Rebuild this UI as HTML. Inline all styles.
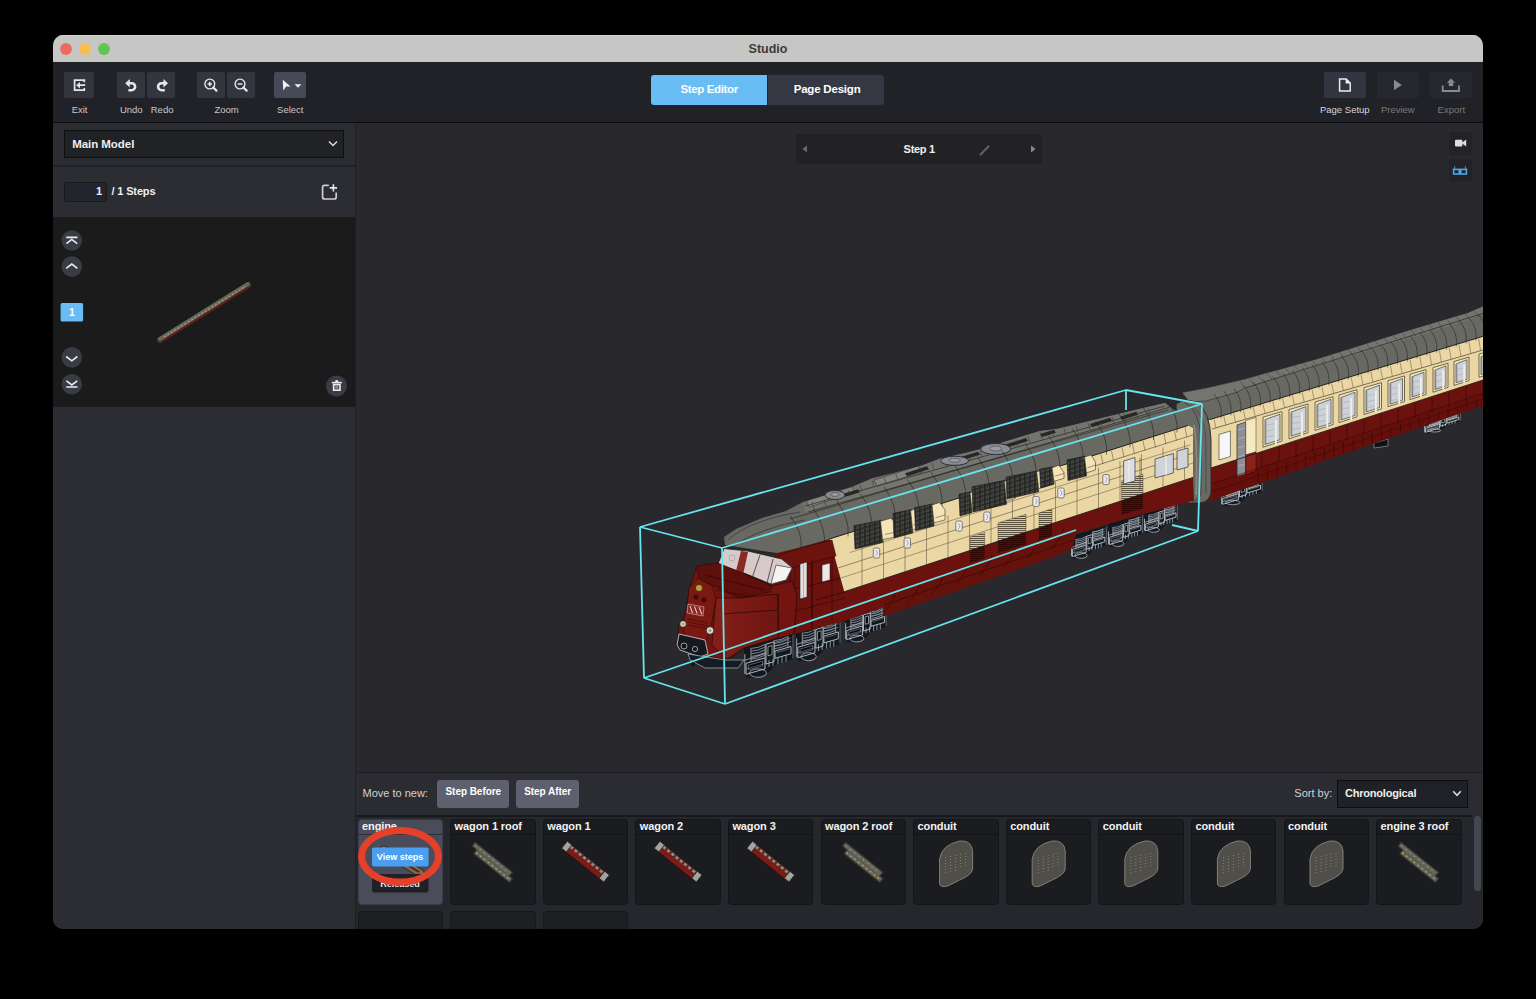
<!DOCTYPE html><html><head><meta charset="utf-8"><style>
*{margin:0;padding:0;box-sizing:border-box}
html,body{width:1536px;height:999px;background:#000;overflow:hidden;font-family:"Liberation Sans",sans-serif}
#win{position:absolute;left:53px;top:35px;width:1430px;height:894px;border-radius:10px;overflow:hidden;background:#2c2d32}
#in{position:absolute;left:-53px;top:-35px;width:1536px;height:999px}
.r{position:absolute}
.t{position:absolute;white-space:nowrap;line-height:1}
svg{position:absolute;left:0;top:0}
</style></head><body><div id="win"><div id="in">
<div class="r" style="left:53px;top:35px;width:1430px;height:27px;background:#c6c6c4;"></div>
<div class="r" style="left:53px;top:35px;width:1430px;height:1px;background:#d3d3d1;"></div>
<div class="t" style="left:718.0px;top:43.3px;width:100px;text-align:center;font-size:12.5px;font-weight:bold;color:#3b3b3b;letter-spacing:0px">Studio</div>
<div class="r" style="left:53px;top:62px;width:1430px;height:60px;background:#212227;"></div>
<div class="r" style="left:53px;top:122px;width:1430px;height:1px;background:#0b0b0d;"></div>
<div class="r" style="left:64px;top:72px;width:30px;height:26px;background:#34363f;border-radius:2px"></div>
<div class="r" style="left:117px;top:72px;width:28px;height:26px;background:#34363f;border-radius:2px"></div>
<div class="r" style="left:147px;top:72px;width:28px;height:26px;background:#34363f;border-radius:2px"></div>
<div class="r" style="left:197px;top:72px;width:28px;height:26px;background:#34363f;border-radius:2px"></div>
<div class="r" style="left:227px;top:72px;width:28px;height:26px;background:#34363f;border-radius:2px"></div>
<div class="r" style="left:274px;top:72px;width:32px;height:26px;background:#464958;border-radius:2px"></div>
<div class="r" style="left:1324px;top:72px;width:42px;height:26px;background:#333640;border-radius:2px"></div>
<div class="r" style="left:1377px;top:72px;width:42px;height:26px;background:#262830;border-radius:2px"></div>
<div class="r" style="left:1430px;top:72px;width:42px;height:26px;background:#262830;border-radius:2px"></div>
<div class="t" style="left:39.6px;top:104.7px;width:80px;text-align:center;font-size:9.5px;font-weight:normal;color:#c8c8cb;letter-spacing:0px">Exit</div>
<div class="t" style="left:91.3px;top:104.7px;width:80px;text-align:center;font-size:9.5px;font-weight:normal;color:#c8c8cb;letter-spacing:0px">Undo</div>
<div class="t" style="left:122.1px;top:104.7px;width:80px;text-align:center;font-size:9.5px;font-weight:normal;color:#c8c8cb;letter-spacing:0px">Redo</div>
<div class="t" style="left:186.6px;top:104.7px;width:80px;text-align:center;font-size:9.5px;font-weight:normal;color:#c8c8cb;letter-spacing:0px">Zoom</div>
<div class="t" style="left:250.3px;top:104.7px;width:80px;text-align:center;font-size:9.5px;font-weight:normal;color:#c8c8cb;letter-spacing:0px">Select</div>
<div class="t" style="left:1304.8px;top:104.7px;width:80px;text-align:center;font-size:9.5px;font-weight:normal;color:#d6d6d9;letter-spacing:0px">Page Setup</div>
<div class="t" style="left:1357.8px;top:104.7px;width:80px;text-align:center;font-size:9.5px;font-weight:normal;color:#78797f;letter-spacing:0px">Preview</div>
<div class="t" style="left:1411.3px;top:104.7px;width:80px;text-align:center;font-size:9.5px;font-weight:normal;color:#78797f;letter-spacing:0px">Export</div>
<div class="r" style="left:651px;top:75px;width:116px;height:30px;background:#68bdf5;border-radius:3px 0 0 3px"></div>
<div class="r" style="left:768px;top:75px;width:116px;height:30px;background:#353842;border-radius:0 3px 3px 0"></div>
<div class="t" style="left:680.4px;top:83.9px;font-size:11.5px;font-weight:bold;color:#ffffff;letter-spacing:-0.35px">Step Editor</div>
<div class="t" style="left:793.7px;top:83.9px;font-size:11.5px;font-weight:bold;color:#ffffff;letter-spacing:-0.2px">Page Design</div>
<div class="r" style="left:53px;top:123px;width:302px;height:806px;background:#2c2d32;"></div>
<div class="r" style="left:355px;top:123px;width:1px;height:806px;background:#1f1f23;"></div>
<div class="r" style="left:64px;top:130px;width:280px;height:28px;background:#212226;border:1px solid #0e0e10"></div>
<div class="t" style="left:72.2px;top:139.0px;font-size:11.5px;font-weight:bold;color:#eeeeee;letter-spacing:-0.05px">Main Model</div>
<div class="r" style="left:53px;top:165px;width:302px;height:2px;background:#222328;"></div>
<div class="r" style="left:64px;top:182px;width:43px;height:20px;background:#23252e;border:1px solid #18191d;border-radius:2px"></div>
<div class="t" style="left:96.0px;top:186.4px;font-size:11px;font-weight:bold;color:#f0f0f0;letter-spacing:0px">1</div>
<div class="t" style="left:111.5px;top:186.4px;font-size:11px;font-weight:bold;color:#eeeeee;letter-spacing:-0.15px">/ 1 Steps</div>
<div class="r" style="left:53px;top:217px;width:302px;height:190px;background:#1b1b1c;"></div>
<div class="r" style="left:356px;top:123px;width:1127px;height:649px;background:#29282d;"></div>
<div class="r" style="left:796px;top:134px;width:246px;height:30px;background:#222226;border-radius:3px"></div>
<div class="t" style="left:903.6px;top:144.3px;font-size:11px;font-weight:bold;color:#eeeeee;letter-spacing:-0.3px">Step 1</div>
<div class="r" style="left:1449px;top:132px;width:23px;height:23px;background:#232327;border-radius:3px"></div>
<div class="r" style="left:1449px;top:159px;width:23px;height:23px;background:#232327;border-radius:3px"></div>
<div class="r" style="left:356px;top:772px;width:1127px;height:1px;background:#1f1f23;"></div>
<div class="r" style="left:356px;top:773px;width:1127px;height:156px;background:#2b2c31;"></div>
<div class="t" style="left:362.5px;top:787.9px;font-size:11px;font-weight:normal;color:#d2d2d5;letter-spacing:0px">Move to new:</div>
<div class="r" style="left:437px;top:780px;width:72px;height:28px;background:#5e606e;border-radius:3px"></div>
<div class="r" style="left:516px;top:780px;width:63px;height:28px;background:#5e606e;border-radius:3px"></div>
<div class="t" style="left:445.5px;top:787.0px;font-size:10px;font-weight:bold;color:#ffffff;letter-spacing:-0.05px">Step Before</div>
<div class="t" style="left:524.2px;top:787.0px;font-size:10px;font-weight:bold;color:#ffffff;letter-spacing:-0.05px">Step After</div>
<div class="t" style="left:1294.3px;top:788.3px;font-size:11px;font-weight:normal;color:#d2d2d5;letter-spacing:0px">Sort by:</div>
<div class="r" style="left:1337px;top:780px;width:131px;height:28px;background:#202126;border:1px solid #0d0d0f"></div>
<div class="t" style="left:1344.9px;top:788.3px;font-size:11px;font-weight:bold;color:#eeeeee;letter-spacing:-0.2px">Chronological</div>
<div class="r" style="left:356px;top:815px;width:1116px;height:2px;background:#17181b;"></div>
<div class="r" style="left:356px;top:817px;width:1127px;height:112px;background:#26272c;"></div>
<div class="r" style="left:357.5px;top:819px;width:85.5px;height:86px;background:#4a4c5a;border:1px solid #3a3c48;border-radius:4px"></div>
<div class="r" style="left:358px;top:833.5px;width:84px;height:1.5px;background:#2b2d37;"></div>
<div class="t" style="left:362.0px;top:821.2px;font-size:11px;font-weight:bold;color:#f2f2f2;letter-spacing:-0.1px">engine</div>
<div class="r" style="left:450.1px;top:819px;width:85.5px;height:86px;background:#1b1c20;border:1px solid #141518;border-radius:4px"></div>
<div class="r" style="left:451px;top:833.5px;width:84px;height:1.5px;background:#121316;"></div>
<div class="t" style="left:454.6px;top:821.2px;font-size:11px;font-weight:bold;color:#f2f2f2;letter-spacing:-0.1px">wagon 1 roof</div>
<div class="r" style="left:542.7px;top:819px;width:85.5px;height:86px;background:#1b1c20;border:1px solid #141518;border-radius:4px"></div>
<div class="r" style="left:544px;top:833.5px;width:83px;height:1.5px;background:#121316;"></div>
<div class="t" style="left:547.2px;top:821.2px;font-size:11px;font-weight:bold;color:#f2f2f2;letter-spacing:-0.1px">wagon 1</div>
<div class="r" style="left:635.3px;top:819px;width:85.5px;height:86px;background:#1b1c20;border:1px solid #141518;border-radius:4px"></div>
<div class="r" style="left:636px;top:833.5px;width:84px;height:1.5px;background:#121316;"></div>
<div class="t" style="left:639.8px;top:821.2px;font-size:11px;font-weight:bold;color:#f2f2f2;letter-spacing:-0.1px">wagon 2</div>
<div class="r" style="left:727.9px;top:819px;width:85.5px;height:86px;background:#1b1c20;border:1px solid #141518;border-radius:4px"></div>
<div class="r" style="left:729px;top:833.5px;width:83px;height:1.5px;background:#121316;"></div>
<div class="t" style="left:732.4px;top:821.2px;font-size:11px;font-weight:bold;color:#f2f2f2;letter-spacing:-0.1px">wagon 3</div>
<div class="r" style="left:820.5px;top:819px;width:85.5px;height:86px;background:#1b1c20;border:1px solid #141518;border-radius:4px"></div>
<div class="r" style="left:822px;top:833.5px;width:83px;height:1.5px;background:#121316;"></div>
<div class="t" style="left:825.0px;top:821.2px;font-size:11px;font-weight:bold;color:#f2f2f2;letter-spacing:-0.1px">wagon 2 roof</div>
<div class="r" style="left:913.1px;top:819px;width:85.5px;height:86px;background:#1b1c20;border:1px solid #141518;border-radius:4px"></div>
<div class="r" style="left:914px;top:833.5px;width:84px;height:1.5px;background:#121316;"></div>
<div class="t" style="left:917.6px;top:821.2px;font-size:11px;font-weight:bold;color:#f2f2f2;letter-spacing:-0.1px">conduit</div>
<div class="r" style="left:1005.7px;top:819px;width:85.5px;height:86px;background:#1b1c20;border:1px solid #141518;border-radius:4px"></div>
<div class="r" style="left:1007px;top:833.5px;width:83px;height:1.5px;background:#121316;"></div>
<div class="t" style="left:1010.2px;top:821.2px;font-size:11px;font-weight:bold;color:#f2f2f2;letter-spacing:-0.1px">conduit</div>
<div class="r" style="left:1098.3px;top:819px;width:85.5px;height:86px;background:#1b1c20;border:1px solid #141518;border-radius:4px"></div>
<div class="r" style="left:1099px;top:833.5px;width:84px;height:1.5px;background:#121316;"></div>
<div class="t" style="left:1102.8px;top:821.2px;font-size:11px;font-weight:bold;color:#f2f2f2;letter-spacing:-0.1px">conduit</div>
<div class="r" style="left:1190.9px;top:819px;width:85.5px;height:86px;background:#1b1c20;border:1px solid #141518;border-radius:4px"></div>
<div class="r" style="left:1192px;top:833.5px;width:83px;height:1.5px;background:#121316;"></div>
<div class="t" style="left:1195.4px;top:821.2px;font-size:11px;font-weight:bold;color:#f2f2f2;letter-spacing:-0.1px">conduit</div>
<div class="r" style="left:1283.5px;top:819px;width:85.5px;height:86px;background:#1b1c20;border:1px solid #141518;border-radius:4px"></div>
<div class="r" style="left:1284px;top:833.5px;width:84px;height:1.5px;background:#121316;"></div>
<div class="t" style="left:1288.0px;top:821.2px;font-size:11px;font-weight:bold;color:#f2f2f2;letter-spacing:-0.1px">conduit</div>
<div class="r" style="left:1376.1px;top:819px;width:85.5px;height:86px;background:#1b1c20;border:1px solid #141518;border-radius:4px"></div>
<div class="r" style="left:1377px;top:833.5px;width:84px;height:1.5px;background:#121316;"></div>
<div class="t" style="left:1380.6px;top:821.2px;font-size:11px;font-weight:bold;color:#f2f2f2;letter-spacing:-0.1px">engine 3 roof</div>
<div class="r" style="left:357.5px;top:910.5px;width:85.5px;height:30px;background:#1e1f23;border:1px solid #17181b;border-radius:4px"></div>
<div class="r" style="left:450.1px;top:910.5px;width:85.5px;height:30px;background:#1e1f23;border:1px solid #17181b;border-radius:4px"></div>
<div class="r" style="left:542.7px;top:910.5px;width:85.5px;height:30px;background:#1e1f23;border:1px solid #17181b;border-radius:4px"></div>
<div class="r" style="left:1474px;top:816px;width:7px;height:75px;background:#45474f;border-radius:4px"></div>
<svg width="1536" height="999" viewBox="0 0 1536 999">
<g fill="none" stroke="#e6e6e8" stroke-linecap="butt">
 <!-- Exit -->
 <path d="M84.3 82.2 V80.1 H74.6 V90.2 H84.3 V88.1" stroke-width="1.7"/>
 <path d="M85.2 85.2 H79" stroke-width="1.8"/>
 <polygon points="76.2,85.2 80,81.9 80,88.5" fill="#e6e6e8" stroke="none"/>
 <!-- Undo -->
 <path d="M128.5 83.2 H131.6 A3.5 3.5 0 0 1 131.6 90.2 H128.4" stroke-width="2.6"/>
 <polygon points="125.2,83.2 129.8,79 129.8,87.4" fill="#e6e6e8" stroke="none"/>
 <!-- Redo -->
 <path d="M164.7 83.2 H161.6 A3.5 3.5 0 0 0 161.6 90.2 H164.8" stroke-width="2.6"/>
 <polygon points="168,83.2 163.4,79 163.4,87.4" fill="#e6e6e8" stroke="none"/>
 <!-- Zoom in -->
 <circle cx="209.8" cy="84" r="4.9" stroke-width="1.4"/>
 <path d="M213.3 87.5 L216.4 90.6" stroke-width="2.3" stroke-linecap="round"/>
 <path d="M207.6 84 H212 M209.8 81.8 V86.2" stroke-width="1.5"/>
 <!-- Zoom out -->
 <circle cx="240" cy="84" r="4.9" stroke-width="1.4"/>
 <path d="M243.5 87.5 L246.6 90.6" stroke-width="2.3" stroke-linecap="round"/>
 <path d="M237.6 84 H242.4" stroke-width="1.6"/>
 <!-- Select -->
 <polygon points="282.7,79.8 290.6,86.4 286.2,86.4 283.3,90.4" fill="#f2f2f4" stroke="none"/>
 <polygon points="294.6,84.2 301.4,84.2 298,87.8" fill="#f2f2f4" stroke="none"/>
 <!-- Page setup doc -->
 <path d="M1339.6 79 H1346.2 L1350.2 83 V91 H1339.6 Z" stroke-width="1.5" stroke="#ececee"/>
 <polygon points="1345.6,78.6 1350.8,83.6 1345.6,83.6" fill="#ececee" stroke="none"/>
 <!-- Preview -->
 <polygon points="1394,79.7 1401.8,85 1394,90.3" fill="#8a8b90" stroke="none"/>
 <!-- Export -->
 <path d="M1442.7 85.6 V91 H1459 V85.6" stroke-width="1.8" stroke="#8a8b90"/>
 <polygon points="1446.8,82.8 1451,78.6 1455.2,82.8" fill="#8a8b90" stroke="none"/>
 <rect x="1448.8" y="82.5" width="4.4" height="3.5" fill="#8a8b90" stroke="none"/>
</g>
<!-- dropdown chevrons -->
<path d="M329 141.5 L333 145.5 L337 141.5" fill="none" stroke="#dcdcde" stroke-width="1.5"/>
<path d="M1453.2 791.3 L1457 795.3 L1460.8 791.3" fill="none" stroke="#dcdcde" stroke-width="1.5"/>
<!-- add step icon -->
<path d="M328.8 185.3 H324.6 Q322.6 185.3 322.6 187.3 V197 Q322.6 199 324.6 199 H334.2 Q336.2 199 336.2 197 V192.6" fill="none" stroke="#cfcfd1" stroke-width="1.7"/>
<path d="M333.4 184.2 V191.6 M329.7 187.9 H337.1" fill="none" stroke="#ececee" stroke-width="1.6"/>
<!-- step list circles -->
<g fill="#393b45">
 <circle cx="71.8" cy="240.5" r="10.3"/>
 <circle cx="71.8" cy="266.6" r="10.3"/>
 <circle cx="71.8" cy="357.4" r="10.3"/>
 <circle cx="71.8" cy="384.2" r="10.3"/>
 <circle cx="336.5" cy="386" r="10.5"/>
</g>
<g fill="none" stroke="#ececee" stroke-width="1.6">
 <path d="M66.2 237.4 H77.5 M66.4 243.6 L71.8 239.4 L77.2 243.6"/>
 <path d="M66.2 268.4 L71.8 264 L77.4 268.4"/>
 <path d="M66.2 356.5 L71.8 360.8 L77.4 356.5"/>
 <path d="M66.4 380.9 L71.8 385 L77.2 380.9 M66.2 387 H77.5"/>
</g>
<!-- trash -->
<g fill="#ececee">
 <rect x="331.9" y="381.8" width="9.9" height="1.6"/>
 <rect x="335.3" y="380.2" width="2.8" height="2"/>
</g>
<rect x="333.6" y="384.6" width="6.4" height="5.6" fill="none" stroke="#ececee" stroke-width="1.6"/>
<rect x="335.2" y="386" width="3.2" height="2.8" fill="#888"/>
<!-- step 1 box -->
<rect x="60.6" y="303" width="22.5" height="18.5" rx="1.5" fill="#69bdf4"/>
<!-- step bar arrows -->
<polygon points="802.5,149 807,145.5 807,152.5" fill="#6a6a70"/>
<polygon points="1035.5,149 1031,145.5 1031,152.5" fill="#8a8a90"/>
<path d="M980.5 154.5 L988.5 146.5" stroke="#5f5f64" stroke-width="2.2" stroke-linecap="round"/>
<!-- camera -->
<rect x="1455" y="139.8" width="7.4" height="6.6" rx="1" fill="#dddddf"/>
<polygon points="1461.5,143.1 1466.2,139.6 1466.2,146.6" fill="#dddddf"/>
<!-- glasses -->
<path d="M1453.8 169.5 L1455 166.5 M1466.2 169.5 L1465 166.5" stroke="#4aa6e8" stroke-width="1" fill="none"/>
<rect x="1453.6" y="169.4" width="5.6" height="4.6" fill="none" stroke="#4aa6e8" stroke-width="1.6"/>
<rect x="1460.8" y="169.4" width="5.6" height="4.6" fill="none" stroke="#4aa6e8" stroke-width="1.6"/>
<path d="M1459.2 170.4 H1460.8" stroke="#4aa6e8" stroke-width="1.4"/>
</svg>

<svg width="1536" height="999" viewBox="0 0 1536 999">
<defs><clipPath id="vpc"><rect x="356" y="123" width="1127" height="649"/></clipPath><pattern id="grl" width="5" height="4.5" patternUnits="userSpaceOnUse" patternTransform="skewY(-17)"><rect width="5" height="4.5" fill="#222320"/><rect x="0.6" y="0.6" width="3.6" height="3.1" fill="#4c4d48"/><rect x="1.4" y="1.3" width="2" height="1.6" fill="#33342f"/></pattern><pattern id="rgrl" width="3" height="2" patternUnits="userSpaceOnUse"><rect width="3" height="2" fill="#4e0d09"/><rect y="0" width="3" height="0.8" fill="#2a0604"/></pattern><pattern id="cgrl" width="3" height="2" patternUnits="userSpaceOnUse"><rect width="3" height="2" fill="#d8c594"/><rect y="0" width="3" height="0.8" fill="#3a3528"/></pattern></defs>
<g clip-path="url(#vpc)">
<polygon points="1221.0,488.0 1263.0,475.4 1263.0,491.4 1247.0,496.6 1242.0,500.9 1229.4,505.5 1223.1,506.0 1221.0,504.0" fill="#121820"/>
<path d="M1227.3 490.1 Q1232.8 490.1 1238.2 486.8" stroke="#9aa2a8" stroke-width="0.8" fill="none"/>
<path d="M1227.3 491.5 Q1232.8 491.5 1238.2 488.2" stroke="#9aa2a8" stroke-width="0.8" fill="none"/>
<path d="M1227.3 492.9 Q1232.8 492.9 1238.2 489.6" stroke="#9aa2a8" stroke-width="0.8" fill="none"/>
<path d="M1227.3 494.3 Q1232.8 494.3 1238.2 491.0" stroke="#9aa2a8" stroke-width="0.8" fill="none"/>
<path d="M1227.3 495.7 Q1232.8 495.7 1238.2 492.4" stroke="#9aa2a8" stroke-width="0.8" fill="none"/>
<polyline points="1226.9,489.8 1226.9,497.0" fill="none" stroke="#c0c6cc" stroke-width="0.7" />
<polyline points="1238.6,486.3 1238.6,493.5" fill="none" stroke="#c0c6cc" stroke-width="0.7" />
<path d="M1246.6 482.3 Q1252.1 482.3 1257.5 479.0" stroke="#9aa2a8" stroke-width="0.8" fill="none"/>
<path d="M1246.6 483.7 Q1252.1 483.7 1257.5 480.4" stroke="#9aa2a8" stroke-width="0.8" fill="none"/>
<path d="M1246.6 485.1 Q1252.1 485.1 1257.5 481.8" stroke="#9aa2a8" stroke-width="0.8" fill="none"/>
<path d="M1246.6 486.5 Q1252.1 486.5 1257.5 483.2" stroke="#9aa2a8" stroke-width="0.8" fill="none"/>
<path d="M1246.6 487.9 Q1252.1 487.9 1257.5 484.6" stroke="#9aa2a8" stroke-width="0.8" fill="none"/>
<polyline points="1246.2,482.0 1246.2,489.2" fill="none" stroke="#c0c6cc" stroke-width="0.7" />
<polyline points="1258.0,478.5 1258.0,485.7" fill="none" stroke="#c0c6cc" stroke-width="0.7" />
<polygon points="1222.7,498.5 1238.6,493.7 1238.6,499.5 1222.7,504.3" fill="#121820" stroke="#c0c6cc" stroke-width="0.9" stroke-linejoin="round"/>
<polygon points="1224.8,499.3 1236.5,495.7 1236.5,498.1 1224.8,501.7" fill="#06090d" stroke="#9aa2a8" stroke-width="0.5" stroke-linejoin="round"/>
<polygon points="1239.5,486.5 1246.2,484.4 1246.2,494.8 1239.5,496.9" fill="#121820" stroke="#c0c6cc" stroke-width="0.9" stroke-linejoin="round"/>
<polygon points="1241.2,487.6 1244.5,486.5 1244.5,491.3 1241.2,492.4" fill="#06090d" stroke="#c0c6cc" stroke-width="0.7" stroke-linejoin="round"/>
<polygon points="1247.0,489.2 1260.5,485.2 1260.5,489.0 1247.0,493.0" fill="#121820" stroke="#c0c6cc" stroke-width="0.9" stroke-linejoin="round"/>
<polyline points="1248.7,489.7 1258.8,486.7" fill="none" stroke="#9aa2a8" stroke-width="0.5" />
<polyline points="1242.0,494.5 1242.0,498.1" fill="none" stroke="#c0c6cc" stroke-width="0.7" />
<polyline points="1245.4,493.5 1245.4,497.1" fill="none" stroke="#c0c6cc" stroke-width="0.7" />
<polyline points="1249.6,492.2 1249.6,495.8" fill="none" stroke="#c0c6cc" stroke-width="0.7" />
<polyline points="1252.9,491.2 1252.9,494.8" fill="none" stroke="#c0c6cc" stroke-width="0.7" />
<polyline points="1256.3,490.2 1256.3,493.8" fill="none" stroke="#c0c6cc" stroke-width="0.7" />
<polyline points="1221.8,496.9 1239.5,491.3" fill="none" stroke="#c0c6cc" stroke-width="0.7" />
<polyline points="1247.0,482.6 1260.5,478.6" fill="none" stroke="#9aa2a8" stroke-width="0.6" />
<polyline points="1247.0,484.6 1260.5,480.6" fill="none" stroke="#9aa2a8" stroke-width="0.6" />
<polyline points="1247.0,486.6 1260.5,482.6" fill="none" stroke="#9aa2a8" stroke-width="0.6" />
<polyline points="1222.7,501.5 1238.6,496.7" fill="none" stroke="#9aa2a8" stroke-width="0.5" />
<ellipse cx="1232.8" cy="502.5" rx="7.1" ry="2.2" fill="none" stroke="#c0c6cc" stroke-width="0.7"/>
<polyline points="1221.6,493.8 1221.6,504.2" fill="none" stroke="#c0c6cc" stroke-width="0.8" />
<polyline points="1262.2,476.7 1262.2,491.3" fill="none" stroke="#9aa2a8" stroke-width="0.6" />
<polygon points="1424.0,421.0 1461.0,409.9 1461.0,421.1 1446.9,425.6 1442.5,428.9 1431.4,432.8 1425.8,433.5 1424.0,432.2" fill="#121820"/>
<path d="M1429.5 422.1 Q1434.4 422.3 1439.2 419.2" stroke="#9aa2a8" stroke-width="0.8" fill="none"/>
<path d="M1429.5 423.1 Q1434.4 423.3 1439.2 420.2" stroke="#9aa2a8" stroke-width="0.8" fill="none"/>
<path d="M1429.5 424.1 Q1434.4 424.3 1439.2 421.2" stroke="#9aa2a8" stroke-width="0.8" fill="none"/>
<path d="M1429.5 425.1 Q1434.4 425.2 1439.2 422.2" stroke="#9aa2a8" stroke-width="0.8" fill="none"/>
<path d="M1429.5 426.1 Q1434.4 426.2 1439.2 423.2" stroke="#9aa2a8" stroke-width="0.8" fill="none"/>
<polyline points="1429.2,422.0 1429.2,427.0" fill="none" stroke="#c0c6cc" stroke-width="0.7" />
<polyline points="1439.5,418.9 1439.5,423.9" fill="none" stroke="#c0c6cc" stroke-width="0.7" />
<path d="M1446.6 415.6 Q1451.4 415.8 1456.2 412.7" stroke="#9aa2a8" stroke-width="0.8" fill="none"/>
<path d="M1446.6 416.6 Q1451.4 416.8 1456.2 413.7" stroke="#9aa2a8" stroke-width="0.8" fill="none"/>
<path d="M1446.6 417.6 Q1451.4 417.7 1456.2 414.7" stroke="#9aa2a8" stroke-width="0.8" fill="none"/>
<path d="M1446.6 418.6 Q1451.4 418.7 1456.2 415.7" stroke="#9aa2a8" stroke-width="0.8" fill="none"/>
<path d="M1446.6 419.5 Q1451.4 419.7 1456.2 416.7" stroke="#9aa2a8" stroke-width="0.8" fill="none"/>
<polyline points="1446.2,415.5 1446.2,420.5" fill="none" stroke="#c0c6cc" stroke-width="0.7" />
<polyline points="1456.6,412.4 1456.6,417.4" fill="none" stroke="#c0c6cc" stroke-width="0.7" />
<polygon points="1425.5,428.3 1439.5,424.0 1439.5,428.1 1425.5,432.3" fill="#121820" stroke="#c0c6cc" stroke-width="0.9" stroke-linejoin="round"/>
<polygon points="1427.3,428.7 1437.7,425.6 1437.7,427.3 1427.3,430.4" fill="#06090d" stroke="#9aa2a8" stroke-width="0.5" stroke-linejoin="round"/>
<polygon points="1440.3,418.9 1446.2,417.1 1446.2,424.4 1440.3,426.2" fill="#121820" stroke="#c0c6cc" stroke-width="0.9" stroke-linejoin="round"/>
<polygon points="1441.8,419.6 1444.7,418.7 1444.7,422.1 1441.8,423.0" fill="#06090d" stroke="#c0c6cc" stroke-width="0.7" stroke-linejoin="round"/>
<polygon points="1446.9,420.4 1458.8,416.9 1458.8,419.5 1446.9,423.1" fill="#121820" stroke="#c0c6cc" stroke-width="0.9" stroke-linejoin="round"/>
<polyline points="1448.4,420.7 1457.3,418.0" fill="none" stroke="#9aa2a8" stroke-width="0.5" />
<polyline points="1442.5,424.4 1442.5,426.9" fill="none" stroke="#c0c6cc" stroke-width="0.7" />
<polyline points="1445.5,423.5 1445.5,426.0" fill="none" stroke="#c0c6cc" stroke-width="0.7" />
<polyline points="1449.2,422.4 1449.2,424.9" fill="none" stroke="#c0c6cc" stroke-width="0.7" />
<polyline points="1452.1,421.5 1452.1,424.0" fill="none" stroke="#c0c6cc" stroke-width="0.7" />
<polyline points="1455.1,420.6 1455.1,423.2" fill="none" stroke="#c0c6cc" stroke-width="0.7" />
<polyline points="1424.7,427.2 1440.3,422.3" fill="none" stroke="#c0c6cc" stroke-width="0.7" />
<polyline points="1446.9,415.8 1458.8,412.2" fill="none" stroke="#9aa2a8" stroke-width="0.6" />
<polyline points="1446.9,417.2 1458.8,413.6" fill="none" stroke="#9aa2a8" stroke-width="0.6" />
<polyline points="1446.9,418.6 1458.8,415.0" fill="none" stroke="#9aa2a8" stroke-width="0.6" />
<polyline points="1425.5,430.4 1439.5,426.1" fill="none" stroke="#9aa2a8" stroke-width="0.5" />
<ellipse cx="1434.4" cy="430.5" rx="6.3" ry="1.5" fill="none" stroke="#c0c6cc" stroke-width="0.7"/>
<polyline points="1424.6,425.0 1424.6,432.3" fill="none" stroke="#c0c6cc" stroke-width="0.8" />
<polyline points="1460.3,410.8 1460.3,421.0" fill="none" stroke="#9aa2a8" stroke-width="0.6" />
<polygon points="1374.0,443.0 1388.0,439.0 1388.0,446.0 1374.0,448.0" fill="#0c1117" stroke="#a9b0b6" stroke-width="0.6" stroke-linejoin="round"/>
<polygon points="1206.0,469.6 1484.0,379.7 1484.0,405.0 1212.0,500.0 1206.0,502.1" fill="#6c120e"/>
<polygon points="1212.0,483.7 1484.0,392.7 1484.0,405.0 1212.0,500.0" fill="#640f0b"/>
<polygon points="1206.0,420.7 1484.0,336.0 1484.0,379.7 1206.0,469.6" fill="#ebd7a4"/>
<polygon points="1182.0,392.5 1206.0,388.0 1245.0,379.0 1318.0,359.0 1410.0,330.3 1468.0,313.0 1484.0,306.0 1484.0,336.0 1210.0,419.5 1196.0,412.0" fill="#686963"/>
<polygon points="1182.0,392.5 1206.0,388.0 1245.0,379.0 1250.0,384.0 1238.0,392.0 1206.0,401.0 1190.0,402.0" fill="#74756e" stroke="#1e1d1a" stroke-width="0.5" stroke-linejoin="round"/>
<polygon points="1237.6,382.0 1318.0,359.0 1410.0,330.3 1468.0,313.0 1484.0,306.0 1484.0,313.0 1468.0,320.0 1410.0,338.0 1318.0,366.0 1245.0,388.0" fill="#74756e"/>
<line x1="1245.0" y1="388.0" x2="1484.0" y2="313.0" stroke="#1e1d1a" stroke-width="0.6" />
<path d="M1214.0 394.1 Q1223.0 404.2 1221.0 418.3" stroke="#1e1d1a" stroke-width="0.5" fill="none"/>
<path d="M1223.8 391.1 Q1232.8 401.2 1230.8 415.3" stroke="#1e1d1a" stroke-width="0.5" fill="none"/>
<path d="M1233.6 388.2 Q1242.6 398.3 1240.6 412.3" stroke="#1e1d1a" stroke-width="0.5" fill="none"/>
<path d="M1243.4 385.3 Q1252.4 395.3 1250.4 409.3" stroke="#1e1d1a" stroke-width="0.5" fill="none"/>
<path d="M1253.2 382.3 Q1262.2 392.3 1260.2 406.3" stroke="#1e1d1a" stroke-width="0.5" fill="none"/>
<path d="M1263.0 379.4 Q1272.0 389.4 1270.0 403.3" stroke="#1e1d1a" stroke-width="0.5" fill="none"/>
<path d="M1272.8 376.5 Q1281.8 386.4 1279.8 400.4" stroke="#1e1d1a" stroke-width="0.5" fill="none"/>
<path d="M1282.6 373.5 Q1291.6 383.4 1289.6 397.4" stroke="#1e1d1a" stroke-width="0.5" fill="none"/>
<path d="M1292.4 370.6 Q1301.4 380.5 1299.4 394.4" stroke="#1e1d1a" stroke-width="0.5" fill="none"/>
<path d="M1302.2 367.7 Q1311.2 377.5 1309.2 391.4" stroke="#1e1d1a" stroke-width="0.5" fill="none"/>
<path d="M1312.0 364.7 Q1321.0 374.6 1319.0 388.4" stroke="#1e1d1a" stroke-width="0.5" fill="none"/>
<path d="M1321.8 361.8 Q1330.8 371.6 1328.8 385.4" stroke="#1e1d1a" stroke-width="0.5" fill="none"/>
<path d="M1331.6 358.8 Q1340.6 368.6 1338.6 382.4" stroke="#1e1d1a" stroke-width="0.5" fill="none"/>
<path d="M1341.4 355.9 Q1350.4 365.7 1348.4 379.5" stroke="#1e1d1a" stroke-width="0.5" fill="none"/>
<path d="M1351.2 353.0 Q1360.2 362.7 1358.2 376.5" stroke="#1e1d1a" stroke-width="0.5" fill="none"/>
<path d="M1361.0 350.0 Q1370.0 359.8 1368.0 373.5" stroke="#1e1d1a" stroke-width="0.5" fill="none"/>
<path d="M1370.8 347.1 Q1379.8 356.8 1377.8 370.5" stroke="#1e1d1a" stroke-width="0.5" fill="none"/>
<path d="M1380.6 344.2 Q1389.6 353.8 1387.6 367.5" stroke="#1e1d1a" stroke-width="0.5" fill="none"/>
<path d="M1390.4 341.2 Q1399.4 350.9 1397.4 364.5" stroke="#1e1d1a" stroke-width="0.5" fill="none"/>
<path d="M1400.2 338.3 Q1409.2 347.9 1407.2 361.5" stroke="#1e1d1a" stroke-width="0.5" fill="none"/>
<path d="M1410.0 335.4 Q1419.0 345.0 1417.0 358.6" stroke="#1e1d1a" stroke-width="0.5" fill="none"/>
<path d="M1419.8 332.4 Q1428.8 342.0 1426.8 355.6" stroke="#1e1d1a" stroke-width="0.5" fill="none"/>
<path d="M1429.6 329.5 Q1438.6 339.0 1436.6 352.6" stroke="#1e1d1a" stroke-width="0.5" fill="none"/>
<path d="M1439.4 326.6 Q1448.4 336.1 1446.4 349.6" stroke="#1e1d1a" stroke-width="0.5" fill="none"/>
<path d="M1449.2 323.6 Q1458.2 333.1 1456.2 346.6" stroke="#1e1d1a" stroke-width="0.5" fill="none"/>
<path d="M1459.0 320.7 Q1468.0 330.2 1466.0 343.6" stroke="#1e1d1a" stroke-width="0.5" fill="none"/>
<path d="M1468.8 317.8 Q1477.8 327.2 1475.8 340.6" stroke="#1e1d1a" stroke-width="0.5" fill="none"/>
<path d="M1478.6 314.8 Q1487.6 324.2 1485.6 337.6" stroke="#1e1d1a" stroke-width="0.5" fill="none"/>
<line x1="1240.0" y1="381.3" x2="1245.0" y2="387.3" stroke="#3a3a36" stroke-width="0.5" />
<line x1="1249.0" y1="378.6" x2="1254.0" y2="384.6" stroke="#3a3a36" stroke-width="0.5" />
<line x1="1258.0" y1="375.9" x2="1263.0" y2="381.9" stroke="#3a3a36" stroke-width="0.5" />
<line x1="1267.0" y1="373.2" x2="1272.0" y2="379.2" stroke="#3a3a36" stroke-width="0.5" />
<line x1="1276.0" y1="370.5" x2="1281.0" y2="376.5" stroke="#3a3a36" stroke-width="0.5" />
<line x1="1285.0" y1="367.8" x2="1290.0" y2="373.8" stroke="#3a3a36" stroke-width="0.5" />
<line x1="1294.0" y1="365.1" x2="1299.0" y2="371.1" stroke="#3a3a36" stroke-width="0.5" />
<line x1="1303.0" y1="362.4" x2="1308.0" y2="368.4" stroke="#3a3a36" stroke-width="0.5" />
<line x1="1312.0" y1="359.7" x2="1317.0" y2="365.7" stroke="#3a3a36" stroke-width="0.5" />
<line x1="1321.0" y1="357.0" x2="1326.0" y2="363.0" stroke="#3a3a36" stroke-width="0.5" />
<line x1="1330.0" y1="354.3" x2="1335.0" y2="360.3" stroke="#3a3a36" stroke-width="0.5" />
<line x1="1339.0" y1="351.6" x2="1344.0" y2="357.6" stroke="#3a3a36" stroke-width="0.5" />
<line x1="1348.0" y1="348.9" x2="1353.0" y2="354.9" stroke="#3a3a36" stroke-width="0.5" />
<line x1="1357.0" y1="346.2" x2="1362.0" y2="352.2" stroke="#3a3a36" stroke-width="0.5" />
<line x1="1366.0" y1="343.5" x2="1371.0" y2="349.5" stroke="#3a3a36" stroke-width="0.5" />
<line x1="1375.0" y1="340.9" x2="1380.0" y2="346.9" stroke="#3a3a36" stroke-width="0.5" />
<line x1="1384.0" y1="338.2" x2="1389.0" y2="344.2" stroke="#3a3a36" stroke-width="0.5" />
<line x1="1393.0" y1="335.5" x2="1398.0" y2="341.5" stroke="#3a3a36" stroke-width="0.5" />
<line x1="1402.0" y1="332.8" x2="1407.0" y2="338.8" stroke="#3a3a36" stroke-width="0.5" />
<line x1="1411.0" y1="330.1" x2="1416.0" y2="336.1" stroke="#3a3a36" stroke-width="0.5" />
<line x1="1420.0" y1="327.4" x2="1425.0" y2="333.4" stroke="#3a3a36" stroke-width="0.5" />
<line x1="1429.0" y1="324.7" x2="1434.0" y2="330.7" stroke="#3a3a36" stroke-width="0.5" />
<line x1="1438.0" y1="322.0" x2="1443.0" y2="328.0" stroke="#3a3a36" stroke-width="0.5" />
<line x1="1447.0" y1="319.3" x2="1452.0" y2="325.3" stroke="#3a3a36" stroke-width="0.5" />
<line x1="1456.0" y1="316.6" x2="1461.0" y2="322.6" stroke="#3a3a36" stroke-width="0.5" />
<line x1="1465.0" y1="313.9" x2="1470.0" y2="319.9" stroke="#3a3a36" stroke-width="0.5" />
<line x1="1474.0" y1="311.2" x2="1479.0" y2="317.2" stroke="#3a3a36" stroke-width="0.5" />
<line x1="1483.0" y1="308.5" x2="1488.0" y2="314.5" stroke="#3a3a36" stroke-width="0.5" />
<line x1="1210.0" y1="419.5" x2="1484.0" y2="336.0" stroke="#1e1d1a" stroke-width="0.9" />
<line x1="1212.0" y1="429.0" x2="1483.0" y2="350.0" stroke="#4a4032" stroke-width="0.7" />
<line x1="1214.0" y1="419.3" x2="1216.0" y2="427.8" stroke="#6a5e44" stroke-width="0.55" />
<line x1="1223.8" y1="416.3" x2="1225.8" y2="425.0" stroke="#6a5e44" stroke-width="0.55" />
<line x1="1233.6" y1="413.3" x2="1235.6" y2="422.1" stroke="#6a5e44" stroke-width="0.55" />
<line x1="1243.4" y1="410.3" x2="1245.4" y2="419.3" stroke="#6a5e44" stroke-width="0.55" />
<line x1="1253.2" y1="407.3" x2="1255.2" y2="416.4" stroke="#6a5e44" stroke-width="0.55" />
<line x1="1263.0" y1="404.3" x2="1265.0" y2="413.5" stroke="#6a5e44" stroke-width="0.55" />
<line x1="1272.8" y1="401.4" x2="1274.8" y2="410.7" stroke="#6a5e44" stroke-width="0.55" />
<line x1="1282.6" y1="398.4" x2="1284.6" y2="407.8" stroke="#6a5e44" stroke-width="0.55" />
<line x1="1292.4" y1="395.4" x2="1294.4" y2="405.0" stroke="#6a5e44" stroke-width="0.55" />
<line x1="1302.2" y1="392.4" x2="1304.2" y2="402.1" stroke="#6a5e44" stroke-width="0.55" />
<line x1="1312.0" y1="389.4" x2="1314.0" y2="399.3" stroke="#6a5e44" stroke-width="0.55" />
<line x1="1321.8" y1="386.4" x2="1323.8" y2="396.4" stroke="#6a5e44" stroke-width="0.55" />
<line x1="1331.6" y1="383.4" x2="1333.6" y2="393.6" stroke="#6a5e44" stroke-width="0.55" />
<line x1="1341.4" y1="380.5" x2="1343.4" y2="390.7" stroke="#6a5e44" stroke-width="0.55" />
<line x1="1351.2" y1="377.5" x2="1353.2" y2="387.8" stroke="#6a5e44" stroke-width="0.55" />
<line x1="1361.0" y1="374.5" x2="1363.0" y2="385.0" stroke="#6a5e44" stroke-width="0.55" />
<line x1="1370.8" y1="371.5" x2="1372.8" y2="382.1" stroke="#6a5e44" stroke-width="0.55" />
<line x1="1380.6" y1="368.5" x2="1382.6" y2="379.3" stroke="#6a5e44" stroke-width="0.55" />
<line x1="1390.4" y1="365.5" x2="1392.4" y2="376.4" stroke="#6a5e44" stroke-width="0.55" />
<line x1="1400.2" y1="362.5" x2="1402.2" y2="373.6" stroke="#6a5e44" stroke-width="0.55" />
<line x1="1410.0" y1="359.6" x2="1412.0" y2="370.7" stroke="#6a5e44" stroke-width="0.55" />
<line x1="1419.8" y1="356.6" x2="1421.8" y2="367.8" stroke="#6a5e44" stroke-width="0.55" />
<line x1="1429.6" y1="353.6" x2="1431.6" y2="365.0" stroke="#6a5e44" stroke-width="0.55" />
<line x1="1439.4" y1="350.6" x2="1441.4" y2="362.1" stroke="#6a5e44" stroke-width="0.55" />
<line x1="1449.2" y1="347.6" x2="1451.2" y2="359.3" stroke="#6a5e44" stroke-width="0.55" />
<line x1="1459.0" y1="344.6" x2="1461.0" y2="356.4" stroke="#6a5e44" stroke-width="0.55" />
<line x1="1468.8" y1="341.6" x2="1470.8" y2="353.6" stroke="#6a5e44" stroke-width="0.55" />
<line x1="1478.6" y1="338.6" x2="1480.6" y2="350.7" stroke="#6a5e44" stroke-width="0.55" />
<polygon points="1263.0,417.1 1282.0,411.6 1282.0,441.0 1263.0,447.2" fill="#f3e6bd" stroke="#3a3428" stroke-width="0.7" stroke-linejoin="round"/>
<polygon points="1265.0,419.6 1280.0,414.2 1280.0,439.7 1265.0,444.5" fill="#cdd1d8" stroke="#2a2a2a" stroke-width="0.6" stroke-linejoin="round"/>
<line x1="1275.9" y1="420.1" x2="1275.9" y2="444.7" stroke="#f2eee2" stroke-width="1.8" />
<line x1="1265.8" y1="420.1" x2="1265.8" y2="444.7" stroke="#7a7c82" stroke-width="0.9" />
<line x1="1266.0" y1="425.1" x2="1274.4" y2="423.6" stroke="#a0a4ac" stroke-width="0.5" />
<line x1="1266.0" y1="431.1" x2="1274.4" y2="429.6" stroke="#a0a4ac" stroke-width="0.5" />
<line x1="1266.0" y1="437.1" x2="1274.4" y2="435.6" stroke="#a0a4ac" stroke-width="0.5" />
<polygon points="1289.0,409.6 1308.0,404.0 1308.0,432.6 1289.0,438.8" fill="#f3e6bd" stroke="#3a3428" stroke-width="0.7" stroke-linejoin="round"/>
<polygon points="1291.0,412.1 1306.0,406.6 1306.0,431.3 1291.0,436.1" fill="#cdd1d8" stroke="#2a2a2a" stroke-width="0.6" stroke-linejoin="round"/>
<line x1="1301.9" y1="412.6" x2="1301.9" y2="436.3" stroke="#f2eee2" stroke-width="1.8" />
<line x1="1291.8" y1="412.6" x2="1291.8" y2="436.3" stroke="#7a7c82" stroke-width="0.9" />
<line x1="1292.0" y1="417.6" x2="1300.4" y2="416.1" stroke="#a0a4ac" stroke-width="0.5" />
<line x1="1292.0" y1="423.6" x2="1300.4" y2="422.1" stroke="#a0a4ac" stroke-width="0.5" />
<line x1="1292.0" y1="429.6" x2="1300.4" y2="428.1" stroke="#a0a4ac" stroke-width="0.5" />
<polygon points="1315.0,402.0 1333.0,396.7 1333.0,424.5 1315.0,430.4" fill="#f3e6bd" stroke="#3a3428" stroke-width="0.7" stroke-linejoin="round"/>
<polygon points="1317.0,404.5 1331.0,399.3 1331.0,423.2 1317.0,427.7" fill="#cdd1d8" stroke="#2a2a2a" stroke-width="0.6" stroke-linejoin="round"/>
<line x1="1327.2" y1="405.0" x2="1327.2" y2="427.9" stroke="#f2eee2" stroke-width="1.8" />
<line x1="1317.8" y1="405.0" x2="1317.8" y2="427.9" stroke="#7a7c82" stroke-width="0.9" />
<line x1="1318.0" y1="410.0" x2="1325.8" y2="408.5" stroke="#a0a4ac" stroke-width="0.5" />
<line x1="1318.0" y1="416.0" x2="1325.8" y2="414.5" stroke="#a0a4ac" stroke-width="0.5" />
<line x1="1318.0" y1="422.0" x2="1325.8" y2="420.5" stroke="#a0a4ac" stroke-width="0.5" />
<polygon points="1339.0,395.0 1357.0,389.7 1357.0,416.8 1339.0,422.6" fill="#f3e6bd" stroke="#3a3428" stroke-width="0.7" stroke-linejoin="round"/>
<polygon points="1341.0,397.5 1355.0,392.3 1355.0,415.4 1341.0,420.0" fill="#cdd1d8" stroke="#2a2a2a" stroke-width="0.6" stroke-linejoin="round"/>
<line x1="1351.2" y1="398.0" x2="1351.2" y2="420.1" stroke="#f2eee2" stroke-width="1.8" />
<line x1="1341.8" y1="398.0" x2="1341.8" y2="420.1" stroke="#7a7c82" stroke-width="0.9" />
<line x1="1342.0" y1="403.0" x2="1349.8" y2="401.5" stroke="#a0a4ac" stroke-width="0.5" />
<line x1="1342.0" y1="409.0" x2="1349.8" y2="407.5" stroke="#a0a4ac" stroke-width="0.5" />
<line x1="1342.0" y1="415.0" x2="1349.8" y2="413.5" stroke="#a0a4ac" stroke-width="0.5" />
<polygon points="1364.0,387.7 1381.5,382.6 1381.5,408.8 1364.0,414.5" fill="#f3e6bd" stroke="#3a3428" stroke-width="0.7" stroke-linejoin="round"/>
<polygon points="1366.0,390.2 1379.5,385.2 1379.5,407.5 1366.0,411.9" fill="#cdd1d8" stroke="#2a2a2a" stroke-width="0.6" stroke-linejoin="round"/>
<line x1="1375.9" y1="390.7" x2="1375.9" y2="412.0" stroke="#f2eee2" stroke-width="1.8" />
<line x1="1366.8" y1="390.7" x2="1366.8" y2="412.0" stroke="#7a7c82" stroke-width="0.9" />
<line x1="1367.0" y1="395.7" x2="1374.5" y2="394.2" stroke="#a0a4ac" stroke-width="0.5" />
<line x1="1367.0" y1="401.7" x2="1374.5" y2="400.2" stroke="#a0a4ac" stroke-width="0.5" />
<line x1="1367.0" y1="407.7" x2="1374.5" y2="406.2" stroke="#a0a4ac" stroke-width="0.5" />
<polygon points="1388.0,380.7 1404.5,375.9 1404.5,401.4 1388.0,406.7" fill="#f3e6bd" stroke="#3a3428" stroke-width="0.7" stroke-linejoin="round"/>
<polygon points="1390.0,383.2 1402.5,378.5 1402.5,400.1 1390.0,404.1" fill="#cdd1d8" stroke="#2a2a2a" stroke-width="0.6" stroke-linejoin="round"/>
<line x1="1399.2" y1="383.7" x2="1399.2" y2="404.2" stroke="#f2eee2" stroke-width="1.8" />
<line x1="1390.8" y1="383.7" x2="1390.8" y2="404.2" stroke="#7a7c82" stroke-width="0.9" />
<line x1="1391.0" y1="388.7" x2="1397.9" y2="387.2" stroke="#a0a4ac" stroke-width="0.5" />
<line x1="1391.0" y1="394.7" x2="1397.9" y2="393.2" stroke="#a0a4ac" stroke-width="0.5" />
<line x1="1391.0" y1="400.7" x2="1397.9" y2="399.2" stroke="#a0a4ac" stroke-width="0.5" />
<polygon points="1410.0,374.3 1426.0,369.6 1426.0,394.4 1410.0,399.6" fill="#f3e6bd" stroke="#3a3428" stroke-width="0.7" stroke-linejoin="round"/>
<polygon points="1412.0,376.8 1424.0,372.2 1424.0,393.1 1412.0,397.0" fill="#cdd1d8" stroke="#2a2a2a" stroke-width="0.6" stroke-linejoin="round"/>
<line x1="1420.9" y1="377.3" x2="1420.9" y2="397.1" stroke="#f2eee2" stroke-width="1.8" />
<line x1="1412.8" y1="377.3" x2="1412.8" y2="397.1" stroke="#7a7c82" stroke-width="0.9" />
<line x1="1413.0" y1="382.3" x2="1419.6" y2="380.8" stroke="#a0a4ac" stroke-width="0.5" />
<line x1="1413.0" y1="388.3" x2="1419.6" y2="386.8" stroke="#a0a4ac" stroke-width="0.5" />
<line x1="1413.0" y1="394.3" x2="1419.6" y2="392.8" stroke="#a0a4ac" stroke-width="0.5" />
<polygon points="1433.0,367.6 1448.0,363.2 1448.0,387.3 1433.0,392.2" fill="#f3e6bd" stroke="#3a3428" stroke-width="0.7" stroke-linejoin="round"/>
<polygon points="1435.0,370.1 1446.0,365.8 1446.0,386.0 1435.0,389.5" fill="#cdd1d8" stroke="#2a2a2a" stroke-width="0.6" stroke-linejoin="round"/>
<line x1="1443.2" y1="370.6" x2="1443.2" y2="389.7" stroke="#f2eee2" stroke-width="1.8" />
<line x1="1435.8" y1="370.6" x2="1435.8" y2="389.7" stroke="#7a7c82" stroke-width="0.9" />
<line x1="1436.0" y1="375.6" x2="1442.0" y2="374.1" stroke="#a0a4ac" stroke-width="0.5" />
<line x1="1436.0" y1="381.6" x2="1442.0" y2="380.1" stroke="#a0a4ac" stroke-width="0.5" />
<line x1="1436.0" y1="387.6" x2="1442.0" y2="386.1" stroke="#a0a4ac" stroke-width="0.5" />
<polygon points="1454.0,361.5 1469.0,357.1 1469.0,380.5 1454.0,385.4" fill="#f3e6bd" stroke="#3a3428" stroke-width="0.7" stroke-linejoin="round"/>
<polygon points="1456.0,364.0 1467.0,359.7 1467.0,379.2 1456.0,382.7" fill="#cdd1d8" stroke="#2a2a2a" stroke-width="0.6" stroke-linejoin="round"/>
<line x1="1464.2" y1="364.5" x2="1464.2" y2="382.9" stroke="#f2eee2" stroke-width="1.8" />
<line x1="1456.8" y1="364.5" x2="1456.8" y2="382.9" stroke="#7a7c82" stroke-width="0.9" />
<line x1="1457.0" y1="369.5" x2="1463.0" y2="368.0" stroke="#a0a4ac" stroke-width="0.5" />
<line x1="1457.0" y1="375.5" x2="1463.0" y2="374.0" stroke="#a0a4ac" stroke-width="0.5" />
<line x1="1457.0" y1="381.5" x2="1463.0" y2="380.0" stroke="#a0a4ac" stroke-width="0.5" />
<polygon points="1479.0,354.2 1493.0,350.1 1493.0,372.8 1479.0,377.3" fill="#f3e6bd" stroke="#3a3428" stroke-width="0.7" stroke-linejoin="round"/>
<polygon points="1481.0,356.7 1491.0,352.7 1491.0,371.4 1481.0,374.6" fill="#cdd1d8" stroke="#2a2a2a" stroke-width="0.6" stroke-linejoin="round"/>
<line x1="1488.5" y1="357.2" x2="1488.5" y2="374.8" stroke="#f2eee2" stroke-width="1.8" />
<line x1="1481.8" y1="357.2" x2="1481.8" y2="374.8" stroke="#7a7c82" stroke-width="0.9" />
<line x1="1482.0" y1="362.2" x2="1487.4" y2="360.7" stroke="#a0a4ac" stroke-width="0.5" />
<line x1="1482.0" y1="368.2" x2="1487.4" y2="366.7" stroke="#a0a4ac" stroke-width="0.5" />
<line x1="1482.0" y1="374.2" x2="1487.4" y2="372.7" stroke="#a0a4ac" stroke-width="0.5" />
<polygon points="1219.0,434.5 1230.4,431.0 1230.4,456.5 1219.0,460.0" fill="#f6f6f8" stroke="#333" stroke-width="0.6" stroke-linejoin="round"/>
<polygon points="1237.0,425.0 1245.7,422.0 1245.7,474.0 1237.0,476.5" fill="#8e9096" stroke="#2a2a2a" stroke-width="0.7" stroke-linejoin="round"/>
<line x1="1238.0" y1="430.0" x2="1245.0" y2="428.0" stroke="#c8cad0" stroke-width="0.5" />
<line x1="1238.0" y1="439.0" x2="1245.0" y2="437.0" stroke="#c8cad0" stroke-width="0.5" />
<line x1="1238.0" y1="448.0" x2="1245.0" y2="446.0" stroke="#c8cad0" stroke-width="0.5" />
<line x1="1238.0" y1="457.0" x2="1245.0" y2="455.0" stroke="#c8cad0" stroke-width="0.5" />
<line x1="1238.0" y1="466.0" x2="1245.0" y2="464.0" stroke="#c8cad0" stroke-width="0.5" />
<polygon points="1245.7,420.5 1256.0,417.5 1256.0,452.0 1245.7,455.0" fill="#f6e8c0" stroke="#3a3428" stroke-width="0.5" stroke-linejoin="round"/>
<polygon points="1245.7,455.0 1256.0,452.0 1256.0,471.0 1245.7,474.5" fill="#8a211a" stroke="#2a0604" stroke-width="0.5" stroke-linejoin="round"/>
<line x1="1206.0" y1="469.6" x2="1484.0" y2="379.7" stroke="#1e1d1a" stroke-width="0.8" />
<line x1="1212.0" y1="483.7" x2="1484.0" y2="392.7" stroke="#3a0806" stroke-width="0.6" />
<line x1="1212.0" y1="491.7" x2="1484.0" y2="398.7" stroke="#3a0806" stroke-width="0.5" />
<line x1="1262.0" y1="452.5" x2="1262.0" y2="467.5" stroke="#2e0604" stroke-width="0.6" />
<line x1="1279.0" y1="447.0" x2="1279.0" y2="462.0" stroke="#2e0604" stroke-width="0.6" />
<line x1="1296.0" y1="441.5" x2="1296.0" y2="456.5" stroke="#2e0604" stroke-width="0.6" />
<line x1="1313.0" y1="436.0" x2="1313.0" y2="451.0" stroke="#2e0604" stroke-width="0.6" />
<line x1="1330.0" y1="430.5" x2="1330.0" y2="445.5" stroke="#2e0604" stroke-width="0.6" />
<line x1="1347.0" y1="425.0" x2="1347.0" y2="440.0" stroke="#2e0604" stroke-width="0.6" />
<line x1="1364.0" y1="419.5" x2="1364.0" y2="434.5" stroke="#2e0604" stroke-width="0.6" />
<line x1="1381.0" y1="414.0" x2="1381.0" y2="429.0" stroke="#2e0604" stroke-width="0.6" />
<line x1="1398.0" y1="408.5" x2="1398.0" y2="423.5" stroke="#2e0604" stroke-width="0.6" />
<line x1="1415.0" y1="403.0" x2="1415.0" y2="418.0" stroke="#2e0604" stroke-width="0.6" />
<line x1="1432.0" y1="397.5" x2="1432.0" y2="412.5" stroke="#2e0604" stroke-width="0.6" />
<line x1="1449.0" y1="392.0" x2="1449.0" y2="407.0" stroke="#2e0604" stroke-width="0.6" />
<line x1="1466.0" y1="386.5" x2="1466.0" y2="401.5" stroke="#2e0604" stroke-width="0.6" />
<line x1="1483.0" y1="381.0" x2="1483.0" y2="396.0" stroke="#2e0604" stroke-width="0.6" />
<line x1="1258.0" y1="469.8" x2="1258.0" y2="482.9" stroke="#2e0604" stroke-width="0.5" />
<line x1="1267.5" y1="466.7" x2="1267.5" y2="479.6" stroke="#2e0604" stroke-width="0.5" />
<line x1="1277.0" y1="463.7" x2="1277.0" y2="476.3" stroke="#2e0604" stroke-width="0.5" />
<line x1="1286.5" y1="460.6" x2="1286.5" y2="473.0" stroke="#2e0604" stroke-width="0.5" />
<line x1="1296.0" y1="457.5" x2="1296.0" y2="469.7" stroke="#2e0604" stroke-width="0.5" />
<line x1="1305.5" y1="454.4" x2="1305.5" y2="466.3" stroke="#2e0604" stroke-width="0.5" />
<line x1="1315.0" y1="451.4" x2="1315.0" y2="463.0" stroke="#2e0604" stroke-width="0.5" />
<line x1="1324.5" y1="448.3" x2="1324.5" y2="459.7" stroke="#2e0604" stroke-width="0.5" />
<line x1="1334.0" y1="445.2" x2="1334.0" y2="456.4" stroke="#2e0604" stroke-width="0.5" />
<line x1="1343.5" y1="442.1" x2="1343.5" y2="453.1" stroke="#2e0604" stroke-width="0.5" />
<line x1="1353.0" y1="439.1" x2="1353.0" y2="449.8" stroke="#2e0604" stroke-width="0.5" />
<line x1="1362.5" y1="436.0" x2="1362.5" y2="446.4" stroke="#2e0604" stroke-width="0.5" />
<line x1="1372.0" y1="432.9" x2="1372.0" y2="443.1" stroke="#2e0604" stroke-width="0.5" />
<line x1="1381.5" y1="429.8" x2="1381.5" y2="439.8" stroke="#2e0604" stroke-width="0.5" />
<line x1="1391.0" y1="426.8" x2="1391.0" y2="436.5" stroke="#2e0604" stroke-width="0.5" />
<line x1="1400.5" y1="423.7" x2="1400.5" y2="433.2" stroke="#2e0604" stroke-width="0.5" />
<line x1="1410.0" y1="420.6" x2="1410.0" y2="429.8" stroke="#2e0604" stroke-width="0.5" />
<line x1="1419.5" y1="417.5" x2="1419.5" y2="426.5" stroke="#2e0604" stroke-width="0.5" />
<line x1="1429.0" y1="414.5" x2="1429.0" y2="423.2" stroke="#2e0604" stroke-width="0.5" />
<line x1="1438.5" y1="411.4" x2="1438.5" y2="419.9" stroke="#2e0604" stroke-width="0.5" />
<line x1="1448.0" y1="408.3" x2="1448.0" y2="416.6" stroke="#2e0604" stroke-width="0.5" />
<line x1="1457.5" y1="405.3" x2="1457.5" y2="413.3" stroke="#2e0604" stroke-width="0.5" />
<line x1="1467.0" y1="402.2" x2="1467.0" y2="409.9" stroke="#2e0604" stroke-width="0.5" />
<line x1="1476.5" y1="399.1" x2="1476.5" y2="406.6" stroke="#2e0604" stroke-width="0.5" />
<line x1="1208.0" y1="420.0" x2="1210.0" y2="498.0" stroke="#1e1d1a" stroke-width="0.7" />
<path d="M1176 404 Q1184 398 1196 402 Q1210 410 1211 440 L1211 492 Q1210 502 1200 503 L1188 503 Q1178 500 1180 490 Z" fill="#696a64" stroke="#262624" stroke-width="0.9"/>
<path d="M1184 402 Q1200 410 1201 440 L1201 492 Q1200 500 1192 502" stroke="#3a3a36" stroke-width="0.8" fill="none"/>
<path d="M1190 404 Q1206 414 1206 445 L1206 494" stroke="#3a3a36" stroke-width="0.6" fill="none"/>
<path d="M1194 425 Q1198 450 1196 495" stroke="#8a8b84" stroke-width="1.6" fill="none"/>
<polygon points="744.0,643.0 794.0,628.5 794.0,658.9 775.0,665.2 769.0,672.2 754.0,678.1 746.5,677.6 744.0,673.4" fill="#121820"/>
<path d="M751.5 648.4 Q758.0 648.1 764.5 644.7" stroke="#9aa2a8" stroke-width="0.8" fill="none"/>
<path d="M751.5 651.1 Q758.0 650.8 764.5 647.3" stroke="#9aa2a8" stroke-width="0.8" fill="none"/>
<path d="M751.5 653.7 Q758.0 653.5 764.5 650.0" stroke="#9aa2a8" stroke-width="0.8" fill="none"/>
<path d="M751.5 656.4 Q758.0 656.1 764.5 652.6" stroke="#9aa2a8" stroke-width="0.8" fill="none"/>
<path d="M751.5 659.1 Q758.0 658.8 764.5 655.3" stroke="#9aa2a8" stroke-width="0.8" fill="none"/>
<polyline points="751.0,647.8 751.0,661.5" fill="none" stroke="#c0c6cc" stroke-width="0.7" />
<polyline points="765.0,643.8 765.0,657.4" fill="none" stroke="#c0c6cc" stroke-width="0.7" />
<path d="M774.5 638.0 Q781.0 637.7 787.5 634.2" stroke="#9aa2a8" stroke-width="0.8" fill="none"/>
<path d="M774.5 640.6 Q781.0 640.3 787.5 636.8" stroke="#9aa2a8" stroke-width="0.8" fill="none"/>
<path d="M774.5 643.3 Q781.0 643.0 787.5 639.5" stroke="#9aa2a8" stroke-width="0.8" fill="none"/>
<path d="M774.5 645.9 Q781.0 645.6 787.5 642.2" stroke="#9aa2a8" stroke-width="0.8" fill="none"/>
<path d="M774.5 648.6 Q781.0 648.3 787.5 644.8" stroke="#9aa2a8" stroke-width="0.8" fill="none"/>
<polyline points="774.0,637.3 774.0,651.0" fill="none" stroke="#c0c6cc" stroke-width="0.7" />
<polyline points="788.0,633.3 788.0,647.0" fill="none" stroke="#c0c6cc" stroke-width="0.7" />
<polygon points="746.0,663.3 765.0,657.8 765.0,668.8 746.0,674.3" fill="#121820" stroke="#c0c6cc" stroke-width="0.9" stroke-linejoin="round"/>
<polygon points="748.5,665.3 762.5,661.2 762.5,665.8 748.5,669.8" fill="#06090d" stroke="#9aa2a8" stroke-width="0.5" stroke-linejoin="round"/>
<polygon points="766.0,644.2 774.0,641.9 774.0,661.7 766.0,664.0" fill="#121820" stroke="#c0c6cc" stroke-width="0.9" stroke-linejoin="round"/>
<polygon points="768.0,646.7 772.0,645.5 772.0,654.6 768.0,655.8" fill="#06090d" stroke="#c0c6cc" stroke-width="0.7" stroke-linejoin="round"/>
<polygon points="775.0,651.1 791.0,646.5 791.0,653.7 775.0,658.3" fill="#121820" stroke="#c0c6cc" stroke-width="0.9" stroke-linejoin="round"/>
<polyline points="777.0,652.4 789.0,649.0" fill="none" stroke="#9aa2a8" stroke-width="0.5" />
<polyline points="769.0,660.1 769.0,666.9" fill="none" stroke="#c0c6cc" stroke-width="0.7" />
<polyline points="773.0,658.9 773.0,665.8" fill="none" stroke="#c0c6cc" stroke-width="0.7" />
<polyline points="778.0,657.5 778.0,664.3" fill="none" stroke="#c0c6cc" stroke-width="0.7" />
<polyline points="782.0,656.3 782.0,663.1" fill="none" stroke="#c0c6cc" stroke-width="0.7" />
<polyline points="786.0,655.1 786.0,662.0" fill="none" stroke="#c0c6cc" stroke-width="0.7" />
<polyline points="745.0,660.2 766.0,653.3" fill="none" stroke="#c0c6cc" stroke-width="0.7" />
<polyline points="775.0,638.6 791.0,633.9" fill="none" stroke="#9aa2a8" stroke-width="0.6" />
<polyline points="775.0,642.4 791.0,637.7" fill="none" stroke="#9aa2a8" stroke-width="0.6" />
<polyline points="775.0,646.2 791.0,641.5" fill="none" stroke="#9aa2a8" stroke-width="0.6" />
<polyline points="746.0,669.0 765.0,663.5" fill="none" stroke="#9aa2a8" stroke-width="0.5" />
<ellipse cx="758.0" cy="673.1" rx="8.5" ry="4.2" fill="none" stroke="#c0c6cc" stroke-width="0.7"/>
<polyline points="744.8,654.2 744.8,673.9" fill="none" stroke="#c0c6cc" stroke-width="0.8" />
<polyline points="793.0,630.7 793.0,658.4" fill="none" stroke="#9aa2a8" stroke-width="0.6" />
<polygon points="796.0,628.0 841.0,615.0 841.0,643.8 823.9,649.4 818.5,656.0 805.0,661.4 798.2,660.8 796.0,656.8" fill="#121820"/>
<path d="M802.8 633.2 Q808.6 633.1 814.5 629.8" stroke="#9aa2a8" stroke-width="0.8" fill="none"/>
<path d="M802.8 635.8 Q808.6 635.7 814.5 632.4" stroke="#9aa2a8" stroke-width="0.8" fill="none"/>
<path d="M802.8 638.3 Q808.6 638.2 814.5 634.9" stroke="#9aa2a8" stroke-width="0.8" fill="none"/>
<path d="M802.8 640.8 Q808.6 640.7 814.5 637.4" stroke="#9aa2a8" stroke-width="0.8" fill="none"/>
<path d="M802.8 643.3 Q808.6 643.2 814.5 639.9" stroke="#9aa2a8" stroke-width="0.8" fill="none"/>
<polyline points="802.3,632.7 802.3,645.6" fill="none" stroke="#c0c6cc" stroke-width="0.7" />
<polyline points="814.9,629.0 814.9,642.0" fill="none" stroke="#c0c6cc" stroke-width="0.7" />
<path d="M823.5 623.6 Q829.3 623.5 835.1 620.2" stroke="#9aa2a8" stroke-width="0.8" fill="none"/>
<path d="M823.5 626.2 Q829.3 626.1 835.1 622.8" stroke="#9aa2a8" stroke-width="0.8" fill="none"/>
<path d="M823.5 628.7 Q829.3 628.6 835.1 625.3" stroke="#9aa2a8" stroke-width="0.8" fill="none"/>
<path d="M823.5 631.2 Q829.3 631.1 835.1 627.8" stroke="#9aa2a8" stroke-width="0.8" fill="none"/>
<path d="M823.5 633.7 Q829.3 633.6 835.1 630.3" stroke="#9aa2a8" stroke-width="0.8" fill="none"/>
<polyline points="823.0,623.0 823.0,636.0" fill="none" stroke="#c0c6cc" stroke-width="0.7" />
<polyline points="835.6,619.4 835.6,632.4" fill="none" stroke="#c0c6cc" stroke-width="0.7" />
<polygon points="797.8,647.3 814.9,642.3 814.9,652.8 797.8,657.7" fill="#121820" stroke="#c0c6cc" stroke-width="0.9" stroke-linejoin="round"/>
<polygon points="800.0,649.1 812.6,645.5 812.6,649.8 800.0,653.5" fill="#06090d" stroke="#9aa2a8" stroke-width="0.5" stroke-linejoin="round"/>
<polygon points="815.8,629.5 823.0,627.4 823.0,646.1 815.8,648.2" fill="#121820" stroke="#c0c6cc" stroke-width="0.9" stroke-linejoin="round"/>
<polygon points="817.6,631.8 821.2,630.8 821.2,639.4 817.6,640.5" fill="#06090d" stroke="#c0c6cc" stroke-width="0.7" stroke-linejoin="round"/>
<polygon points="823.9,636.1 838.3,631.9 838.3,638.8 823.9,642.9" fill="#121820" stroke="#c0c6cc" stroke-width="0.9" stroke-linejoin="round"/>
<polyline points="825.7,637.4 836.5,634.3" fill="none" stroke="#9aa2a8" stroke-width="0.5" />
<polyline points="818.5,644.5 818.5,651.0" fill="none" stroke="#c0c6cc" stroke-width="0.7" />
<polyline points="822.1,643.5 822.1,650.0" fill="none" stroke="#c0c6cc" stroke-width="0.7" />
<polyline points="826.6,642.2 826.6,648.6" fill="none" stroke="#c0c6cc" stroke-width="0.7" />
<polyline points="830.2,641.1 830.2,647.6" fill="none" stroke="#c0c6cc" stroke-width="0.7" />
<polyline points="833.8,640.1 833.8,646.6" fill="none" stroke="#c0c6cc" stroke-width="0.7" />
<polyline points="796.9,644.3 815.8,638.1" fill="none" stroke="#c0c6cc" stroke-width="0.7" />
<polyline points="823.9,624.2 838.3,620.1" fill="none" stroke="#9aa2a8" stroke-width="0.6" />
<polyline points="823.9,627.8 838.3,623.7" fill="none" stroke="#9aa2a8" stroke-width="0.6" />
<polyline points="823.9,631.4 838.3,627.3" fill="none" stroke="#9aa2a8" stroke-width="0.6" />
<polyline points="797.8,652.7 814.9,647.7" fill="none" stroke="#9aa2a8" stroke-width="0.5" />
<ellipse cx="808.6" cy="656.7" rx="7.7" ry="4.0" fill="none" stroke="#c0c6cc" stroke-width="0.7"/>
<polyline points="796.7,638.6 796.7,657.3" fill="none" stroke="#c0c6cc" stroke-width="0.8" />
<polyline points="840.1,617.0 840.1,643.3" fill="none" stroke="#9aa2a8" stroke-width="0.6" />
<polygon points="845.0,614.0 887.0,601.8 887.0,626.6 871.0,631.9 866.0,637.7 853.4,642.6 847.1,642.2 845.0,638.8" fill="#121820"/>
<path d="M851.3 618.4 Q856.8 618.4 862.2 615.2" stroke="#9aa2a8" stroke-width="0.8" fill="none"/>
<path d="M851.3 620.5 Q856.8 620.6 862.2 617.4" stroke="#9aa2a8" stroke-width="0.8" fill="none"/>
<path d="M851.3 622.7 Q856.8 622.7 862.2 619.5" stroke="#9aa2a8" stroke-width="0.8" fill="none"/>
<path d="M851.3 624.9 Q856.8 624.9 862.2 621.7" stroke="#9aa2a8" stroke-width="0.8" fill="none"/>
<path d="M851.3 627.1 Q856.8 627.1 862.2 623.9" stroke="#9aa2a8" stroke-width="0.8" fill="none"/>
<polyline points="850.9,617.9 850.9,629.0" fill="none" stroke="#c0c6cc" stroke-width="0.7" />
<polyline points="862.6,614.5 862.6,625.6" fill="none" stroke="#c0c6cc" stroke-width="0.7" />
<path d="M870.6 609.7 Q876.1 609.7 881.5 606.5" stroke="#9aa2a8" stroke-width="0.8" fill="none"/>
<path d="M870.6 611.8 Q876.1 611.9 881.5 608.7" stroke="#9aa2a8" stroke-width="0.8" fill="none"/>
<path d="M870.6 614.0 Q876.1 614.0 881.5 610.8" stroke="#9aa2a8" stroke-width="0.8" fill="none"/>
<path d="M870.6 616.2 Q876.1 616.2 881.5 613.0" stroke="#9aa2a8" stroke-width="0.8" fill="none"/>
<path d="M870.6 618.4 Q876.1 618.4 881.5 615.2" stroke="#9aa2a8" stroke-width="0.8" fill="none"/>
<polyline points="870.2,609.2 870.2,620.3" fill="none" stroke="#c0c6cc" stroke-width="0.7" />
<polyline points="882.0,605.8 882.0,616.9" fill="none" stroke="#c0c6cc" stroke-width="0.7" />
<polygon points="846.7,630.6 862.6,625.9 862.6,634.9 846.7,639.6" fill="#121820" stroke="#c0c6cc" stroke-width="0.9" stroke-linejoin="round"/>
<polygon points="848.8,632.1 860.5,628.7 860.5,632.4 848.8,635.8" fill="#06090d" stroke="#9aa2a8" stroke-width="0.5" stroke-linejoin="round"/>
<polygon points="863.5,614.8 870.2,612.9 870.2,629.0 863.5,631.0" fill="#121820" stroke="#c0c6cc" stroke-width="0.9" stroke-linejoin="round"/>
<polygon points="865.2,616.8 868.5,615.9 868.5,623.3 865.2,624.3" fill="#06090d" stroke="#c0c6cc" stroke-width="0.7" stroke-linejoin="round"/>
<polygon points="871.0,620.4 884.5,616.5 884.5,622.4 871.0,626.3" fill="#121820" stroke="#c0c6cc" stroke-width="0.9" stroke-linejoin="round"/>
<polyline points="872.7,621.5 882.8,618.5" fill="none" stroke="#9aa2a8" stroke-width="0.5" />
<polyline points="866.0,627.8 866.0,633.3" fill="none" stroke="#c0c6cc" stroke-width="0.7" />
<polyline points="869.4,626.8 869.4,632.4" fill="none" stroke="#c0c6cc" stroke-width="0.7" />
<polyline points="873.6,625.6 873.6,631.1" fill="none" stroke="#c0c6cc" stroke-width="0.7" />
<polyline points="876.9,624.6 876.9,630.2" fill="none" stroke="#c0c6cc" stroke-width="0.7" />
<polyline points="880.3,623.6 880.3,629.2" fill="none" stroke="#c0c6cc" stroke-width="0.7" />
<polyline points="845.8,628.0 863.5,622.3" fill="none" stroke="#c0c6cc" stroke-width="0.7" />
<polyline points="871.0,610.2 884.5,606.3" fill="none" stroke="#9aa2a8" stroke-width="0.6" />
<polyline points="871.0,613.3 884.5,609.4" fill="none" stroke="#9aa2a8" stroke-width="0.6" />
<polyline points="871.0,616.4 884.5,612.5" fill="none" stroke="#9aa2a8" stroke-width="0.6" />
<polyline points="846.7,635.2 862.6,630.6" fill="none" stroke="#9aa2a8" stroke-width="0.5" />
<ellipse cx="856.8" cy="638.5" rx="7.1" ry="3.4" fill="none" stroke="#c0c6cc" stroke-width="0.7"/>
<polyline points="845.6,623.1 845.6,639.2" fill="none" stroke="#c0c6cc" stroke-width="0.8" />
<polyline points="886.2,603.6 886.2,626.2" fill="none" stroke="#9aa2a8" stroke-width="0.6" />
<polygon points="1071.0,536.0 1107.0,525.2 1107.0,545.2 1093.3,549.8 1089.0,554.6 1078.2,558.8 1072.8,558.7 1071.0,556.0" fill="#121820"/>
<path d="M1076.4 539.4 Q1081.1 539.6 1085.8 536.6" stroke="#9aa2a8" stroke-width="0.8" fill="none"/>
<path d="M1076.4 541.1 Q1081.1 541.3 1085.8 538.3" stroke="#9aa2a8" stroke-width="0.8" fill="none"/>
<path d="M1076.4 542.9 Q1081.1 543.1 1085.8 540.1" stroke="#9aa2a8" stroke-width="0.8" fill="none"/>
<path d="M1076.4 544.6 Q1081.1 544.8 1085.8 541.8" stroke="#9aa2a8" stroke-width="0.8" fill="none"/>
<path d="M1076.4 546.4 Q1081.1 546.6 1085.8 543.6" stroke="#9aa2a8" stroke-width="0.8" fill="none"/>
<polyline points="1076.0,539.0 1076.0,548.0" fill="none" stroke="#c0c6cc" stroke-width="0.7" />
<polyline points="1086.1,536.0 1086.1,545.0" fill="none" stroke="#c0c6cc" stroke-width="0.7" />
<path d="M1093.0 531.9 Q1097.6 532.1 1102.3 529.1" stroke="#9aa2a8" stroke-width="0.8" fill="none"/>
<path d="M1093.0 533.7 Q1097.6 533.9 1102.3 530.9" stroke="#9aa2a8" stroke-width="0.8" fill="none"/>
<path d="M1093.0 535.4 Q1097.6 535.6 1102.3 532.6" stroke="#9aa2a8" stroke-width="0.8" fill="none"/>
<path d="M1093.0 537.2 Q1097.6 537.4 1102.3 534.4" stroke="#9aa2a8" stroke-width="0.8" fill="none"/>
<path d="M1093.0 538.9 Q1097.6 539.1 1102.3 536.1" stroke="#9aa2a8" stroke-width="0.8" fill="none"/>
<polyline points="1092.6,531.5 1092.6,540.5" fill="none" stroke="#c0c6cc" stroke-width="0.7" />
<polyline points="1102.7,528.5 1102.7,537.5" fill="none" stroke="#c0c6cc" stroke-width="0.7" />
<polygon points="1072.4,549.3 1086.1,545.2 1086.1,552.5 1072.4,556.6" fill="#121820" stroke="#c0c6cc" stroke-width="0.9" stroke-linejoin="round"/>
<polygon points="1074.2,550.5 1084.3,547.5 1084.3,550.5 1074.2,553.5" fill="#06090d" stroke="#9aa2a8" stroke-width="0.5" stroke-linejoin="round"/>
<polygon points="1086.8,536.2 1092.6,534.5 1092.6,547.5 1086.8,549.2" fill="#121820" stroke="#c0c6cc" stroke-width="0.9" stroke-linejoin="round"/>
<polygon points="1088.3,537.8 1091.2,537.0 1091.2,543.0 1088.3,543.8" fill="#06090d" stroke="#c0c6cc" stroke-width="0.7" stroke-linejoin="round"/>
<polygon points="1093.3,540.6 1104.8,537.1 1104.8,541.8 1093.3,545.3" fill="#121820" stroke="#c0c6cc" stroke-width="0.9" stroke-linejoin="round"/>
<polyline points="1094.8,541.4 1103.4,538.8" fill="none" stroke="#9aa2a8" stroke-width="0.5" />
<polyline points="1089.0,546.6 1089.0,551.1" fill="none" stroke="#c0c6cc" stroke-width="0.7" />
<polyline points="1091.9,545.7 1091.9,550.2" fill="none" stroke="#c0c6cc" stroke-width="0.7" />
<polyline points="1095.5,544.7 1095.5,549.2" fill="none" stroke="#c0c6cc" stroke-width="0.7" />
<polyline points="1098.4,543.8 1098.4,548.3" fill="none" stroke="#c0c6cc" stroke-width="0.7" />
<polyline points="1101.2,542.9 1101.2,547.4" fill="none" stroke="#c0c6cc" stroke-width="0.7" />
<polyline points="1071.7,547.3 1086.8,542.2" fill="none" stroke="#c0c6cc" stroke-width="0.7" />
<polyline points="1093.3,532.3 1104.8,528.8" fill="none" stroke="#9aa2a8" stroke-width="0.6" />
<polyline points="1093.3,534.8 1104.8,531.3" fill="none" stroke="#9aa2a8" stroke-width="0.6" />
<polyline points="1093.3,537.3 1104.8,533.8" fill="none" stroke="#9aa2a8" stroke-width="0.6" />
<polyline points="1072.4,553.1 1086.1,549.0" fill="none" stroke="#9aa2a8" stroke-width="0.5" />
<ellipse cx="1081.1" cy="555.5" rx="6.1" ry="2.8" fill="none" stroke="#c0c6cc" stroke-width="0.7"/>
<polyline points="1071.5,543.3 1071.5,556.3" fill="none" stroke="#c0c6cc" stroke-width="0.8" />
<polyline points="1106.3,526.7 1106.3,544.9" fill="none" stroke="#9aa2a8" stroke-width="0.6" />
<polygon points="1108.0,524.0 1143.0,513.5 1143.0,533.5 1129.7,538.0 1125.5,542.8 1115.0,546.9 1109.8,546.7 1108.0,544.0" fill="#121820"/>
<path d="M1113.2 527.4 Q1117.8 527.7 1122.3 524.7" stroke="#9aa2a8" stroke-width="0.8" fill="none"/>
<path d="M1113.2 529.2 Q1117.8 529.4 1122.3 526.4" stroke="#9aa2a8" stroke-width="0.8" fill="none"/>
<path d="M1113.2 530.9 Q1117.8 531.2 1122.3 528.2" stroke="#9aa2a8" stroke-width="0.8" fill="none"/>
<path d="M1113.2 532.7 Q1117.8 532.9 1122.3 529.9" stroke="#9aa2a8" stroke-width="0.8" fill="none"/>
<path d="M1113.2 534.4 Q1117.8 534.7 1122.3 531.7" stroke="#9aa2a8" stroke-width="0.8" fill="none"/>
<polyline points="1112.9,527.0 1112.9,536.0" fill="none" stroke="#c0c6cc" stroke-width="0.7" />
<polyline points="1122.7,524.1 1122.7,533.1" fill="none" stroke="#c0c6cc" stroke-width="0.7" />
<path d="M1129.3 520.1 Q1133.9 520.3 1138.5 517.4" stroke="#9aa2a8" stroke-width="0.8" fill="none"/>
<path d="M1129.3 521.8 Q1133.9 522.1 1138.5 519.1" stroke="#9aa2a8" stroke-width="0.8" fill="none"/>
<path d="M1129.3 523.6 Q1133.9 523.8 1138.5 520.9" stroke="#9aa2a8" stroke-width="0.8" fill="none"/>
<path d="M1129.3 525.3 Q1133.9 525.6 1138.5 522.6" stroke="#9aa2a8" stroke-width="0.8" fill="none"/>
<path d="M1129.3 527.1 Q1133.9 527.3 1138.5 524.4" stroke="#9aa2a8" stroke-width="0.8" fill="none"/>
<polyline points="1129.0,519.7 1129.0,528.7" fill="none" stroke="#c0c6cc" stroke-width="0.7" />
<polyline points="1138.8,516.8 1138.8,525.8" fill="none" stroke="#c0c6cc" stroke-width="0.7" />
<polygon points="1109.4,537.3 1122.7,533.3 1122.7,540.6 1109.4,544.6" fill="#121820" stroke="#c0c6cc" stroke-width="0.9" stroke-linejoin="round"/>
<polygon points="1111.2,538.6 1121.0,535.6 1121.0,538.6 1111.2,541.6" fill="#06090d" stroke="#9aa2a8" stroke-width="0.5" stroke-linejoin="round"/>
<polygon points="1123.4,524.4 1129.0,522.7 1129.0,535.7 1123.4,537.4" fill="#121820" stroke="#c0c6cc" stroke-width="0.9" stroke-linejoin="round"/>
<polygon points="1124.8,526.0 1127.6,525.1 1127.6,531.1 1124.8,532.0" fill="#06090d" stroke="#c0c6cc" stroke-width="0.7" stroke-linejoin="round"/>
<polygon points="1129.7,528.7 1140.9,525.4 1140.9,530.1 1129.7,533.5" fill="#121820" stroke="#c0c6cc" stroke-width="0.9" stroke-linejoin="round"/>
<polyline points="1131.1,529.6 1139.5,527.0" fill="none" stroke="#9aa2a8" stroke-width="0.5" />
<polyline points="1125.5,534.8 1125.5,539.2" fill="none" stroke="#c0c6cc" stroke-width="0.7" />
<polyline points="1128.3,533.9 1128.3,538.4" fill="none" stroke="#c0c6cc" stroke-width="0.7" />
<polyline points="1131.8,532.9 1131.8,537.4" fill="none" stroke="#c0c6cc" stroke-width="0.7" />
<polyline points="1134.6,532.0 1134.6,536.5" fill="none" stroke="#c0c6cc" stroke-width="0.7" />
<polyline points="1137.4,531.2 1137.4,535.7" fill="none" stroke="#c0c6cc" stroke-width="0.7" />
<polyline points="1108.7,535.3 1123.4,530.4" fill="none" stroke="#c0c6cc" stroke-width="0.7" />
<polyline points="1129.7,520.5 1140.9,517.1" fill="none" stroke="#9aa2a8" stroke-width="0.6" />
<polyline points="1129.7,523.0 1140.9,519.6" fill="none" stroke="#9aa2a8" stroke-width="0.6" />
<polyline points="1129.7,525.5 1140.9,522.1" fill="none" stroke="#9aa2a8" stroke-width="0.6" />
<polyline points="1109.4,541.1 1122.7,537.1" fill="none" stroke="#9aa2a8" stroke-width="0.5" />
<ellipse cx="1117.8" cy="543.6" rx="6.0" ry="2.8" fill="none" stroke="#c0c6cc" stroke-width="0.7"/>
<polyline points="1108.5,531.3 1108.5,544.3" fill="none" stroke="#c0c6cc" stroke-width="0.8" />
<polyline points="1142.3,515.0 1142.3,533.2" fill="none" stroke="#9aa2a8" stroke-width="0.6" />
<polygon points="1144.0,512.0 1178.0,501.8 1178.0,520.2 1165.1,524.5 1161.0,529.0 1150.8,533.0 1145.7,532.9 1144.0,530.4" fill="#121820"/>
<path d="M1149.1 515.1 Q1153.5 515.3 1157.9 512.4" stroke="#9aa2a8" stroke-width="0.8" fill="none"/>
<path d="M1149.1 516.7 Q1153.5 517.0 1157.9 514.0" stroke="#9aa2a8" stroke-width="0.8" fill="none"/>
<path d="M1149.1 518.3 Q1153.5 518.6 1157.9 515.6" stroke="#9aa2a8" stroke-width="0.8" fill="none"/>
<path d="M1149.1 519.9 Q1153.5 520.2 1157.9 517.2" stroke="#9aa2a8" stroke-width="0.8" fill="none"/>
<path d="M1149.1 521.5 Q1153.5 521.8 1157.9 518.9" stroke="#9aa2a8" stroke-width="0.8" fill="none"/>
<polyline points="1148.8,514.7 1148.8,523.0" fill="none" stroke="#c0c6cc" stroke-width="0.7" />
<polyline points="1158.3,511.9 1158.3,520.1" fill="none" stroke="#c0c6cc" stroke-width="0.7" />
<path d="M1164.7 508.1 Q1169.2 508.4 1173.6 505.4" stroke="#9aa2a8" stroke-width="0.8" fill="none"/>
<path d="M1164.7 509.7 Q1169.2 510.0 1173.6 507.0" stroke="#9aa2a8" stroke-width="0.8" fill="none"/>
<path d="M1164.7 511.3 Q1169.2 511.6 1173.6 508.6" stroke="#9aa2a8" stroke-width="0.8" fill="none"/>
<path d="M1164.7 512.9 Q1169.2 513.2 1173.6 510.3" stroke="#9aa2a8" stroke-width="0.8" fill="none"/>
<path d="M1164.7 514.5 Q1169.2 514.8 1173.6 511.9" stroke="#9aa2a8" stroke-width="0.8" fill="none"/>
<polyline points="1164.4,507.7 1164.4,516.0" fill="none" stroke="#c0c6cc" stroke-width="0.7" />
<polyline points="1173.9,504.9 1173.9,513.1" fill="none" stroke="#c0c6cc" stroke-width="0.7" />
<polygon points="1145.4,524.2 1158.3,520.4 1158.3,527.0 1145.4,530.9" fill="#121820" stroke="#c0c6cc" stroke-width="0.9" stroke-linejoin="round"/>
<polygon points="1147.1,525.3 1156.6,522.5 1156.6,525.2 1147.1,528.1" fill="#06090d" stroke="#9aa2a8" stroke-width="0.5" stroke-linejoin="round"/>
<polygon points="1159.0,512.1 1164.4,510.5 1164.4,522.4 1159.0,524.1" fill="#121820" stroke="#c0c6cc" stroke-width="0.9" stroke-linejoin="round"/>
<polygon points="1160.3,513.5 1163.0,512.7 1163.0,518.2 1160.3,519.1" fill="#06090d" stroke="#c0c6cc" stroke-width="0.7" stroke-linejoin="round"/>
<polygon points="1165.1,516.0 1176.0,512.8 1176.0,517.1 1165.1,520.4" fill="#121820" stroke="#c0c6cc" stroke-width="0.9" stroke-linejoin="round"/>
<polyline points="1166.4,516.8 1174.6,514.3" fill="none" stroke="#9aa2a8" stroke-width="0.5" />
<polyline points="1161.0,521.6 1161.0,525.8" fill="none" stroke="#c0c6cc" stroke-width="0.7" />
<polyline points="1163.7,520.8 1163.7,524.9" fill="none" stroke="#c0c6cc" stroke-width="0.7" />
<polyline points="1167.1,519.8 1167.1,523.9" fill="none" stroke="#c0c6cc" stroke-width="0.7" />
<polyline points="1169.8,519.0 1169.8,523.1" fill="none" stroke="#c0c6cc" stroke-width="0.7" />
<polyline points="1172.6,518.2 1172.6,522.3" fill="none" stroke="#c0c6cc" stroke-width="0.7" />
<polyline points="1144.7,522.4 1159.0,517.6" fill="none" stroke="#c0c6cc" stroke-width="0.7" />
<polyline points="1165.1,508.4 1176.0,505.2" fill="none" stroke="#9aa2a8" stroke-width="0.6" />
<polyline points="1165.1,510.7 1176.0,507.5" fill="none" stroke="#9aa2a8" stroke-width="0.6" />
<polyline points="1165.1,513.0 1176.0,509.8" fill="none" stroke="#9aa2a8" stroke-width="0.6" />
<polyline points="1145.4,527.7 1158.3,523.8" fill="none" stroke="#9aa2a8" stroke-width="0.5" />
<ellipse cx="1153.5" cy="529.8" rx="5.8" ry="2.5" fill="none" stroke="#c0c6cc" stroke-width="0.7"/>
<polyline points="1144.5,518.7 1144.5,530.7" fill="none" stroke="#c0c6cc" stroke-width="0.8" />
<polyline points="1177.3,503.2 1177.3,519.9" fill="none" stroke="#9aa2a8" stroke-width="0.6" />
<polygon points="745.0,598.0 844.3,591.7 1193.0,477.4 1194.0,500.4 1125.0,519.0 1076.0,534.0 1072.0,548.0 1060.0,554.5 970.0,586.0 884.0,616.0 884.0,607.0 845.0,621.0 794.0,634.0 744.0,648.0 738.0,640.0" fill="#6c120e"/>
<polygon points="884.0,598.0 1076.0,532.0 1072.0,548.0 1060.0,554.5 884.0,616.0" fill="#65110c"/>
<path d="M896.0 591.5 Q893.0 603.5 883.0 612.5" stroke="#2e0604" stroke-width="0.55" fill="none"/>
<path d="M920.0 582.4 Q917.0 594.4 907.0 603.4" stroke="#2e0604" stroke-width="0.55" fill="none"/>
<path d="M944.0 573.3 Q941.0 585.3 931.0 594.3" stroke="#2e0604" stroke-width="0.55" fill="none"/>
<path d="M968.0 564.2 Q965.0 576.2 955.0 585.2" stroke="#2e0604" stroke-width="0.55" fill="none"/>
<path d="M992.0 555.1 Q989.0 567.1 979.0 576.1" stroke="#2e0604" stroke-width="0.55" fill="none"/>
<path d="M1016.0 546.0 Q1013.0 558.0 1003.0 567.0" stroke="#2e0604" stroke-width="0.55" fill="none"/>
<path d="M1040.0 536.9 Q1037.0 548.9 1027.0 557.9" stroke="#2e0604" stroke-width="0.55" fill="none"/>
<path d="M1064.0 527.8 Q1061.0 539.8 1051.0 548.8" stroke="#2e0604" stroke-width="0.55" fill="none"/>
<polyline points="884.0,605.0 1074.0,540.0" fill="none" stroke="#2e0604" stroke-width="0.5" />
<polygon points="777.0,553.0 796.0,548.5 829.7,538.9 844.3,591.7 800.0,604.0 760.0,615.0 745.0,598.0" fill="#6c120e"/>
<line x1="795.0" y1="560.0" x2="795.0" y2="632.0" stroke="#2e0604" stroke-width="0.6" />
<line x1="812.0" y1="552.0" x2="812.0" y2="628.0" stroke="#2e0604" stroke-width="0.6" />
<line x1="832.0" y1="546.0" x2="832.0" y2="620.0" stroke="#2e0604" stroke-width="0.6" />
<line x1="790.0" y1="590.0" x2="842.0" y2="578.0" stroke="#2e0604" stroke-width="0.6" />
<line x1="795.0" y1="611.0" x2="845.0" y2="598.0" stroke="#2e0604" stroke-width="0.6" />
<polygon points="829.7,538.9 1188.0,425.5 1193.0,428.0 1193.0,477.4 844.3,591.7" fill="#ebd7a4"/>
<line x1="838.0" y1="568.0" x2="1193.0" y2="453.0" stroke="#4a4032" stroke-width="0.55" />
<line x1="841.0" y1="578.0" x2="1193.0" y2="463.0" stroke="#4a4032" stroke-width="0.45" />
<line x1="862.0" y1="542.7" x2="862.0" y2="585.4" stroke="#4a4032" stroke-width="0.5" />
<line x1="883.5" y1="535.9" x2="883.5" y2="578.4" stroke="#4a4032" stroke-width="0.5" />
<line x1="905.0" y1="529.1" x2="905.0" y2="571.3" stroke="#4a4032" stroke-width="0.5" />
<line x1="926.5" y1="522.3" x2="926.5" y2="564.3" stroke="#4a4032" stroke-width="0.5" />
<line x1="948.0" y1="515.5" x2="948.0" y2="557.2" stroke="#4a4032" stroke-width="0.5" />
<line x1="969.5" y1="508.7" x2="969.5" y2="550.2" stroke="#4a4032" stroke-width="0.5" />
<line x1="991.0" y1="501.8" x2="991.0" y2="543.1" stroke="#4a4032" stroke-width="0.5" />
<line x1="1012.5" y1="495.0" x2="1012.5" y2="536.1" stroke="#4a4032" stroke-width="0.5" />
<line x1="1034.0" y1="488.2" x2="1034.0" y2="529.0" stroke="#4a4032" stroke-width="0.5" />
<line x1="1055.5" y1="481.4" x2="1055.5" y2="522.0" stroke="#4a4032" stroke-width="0.5" />
<line x1="1077.0" y1="474.6" x2="1077.0" y2="514.9" stroke="#4a4032" stroke-width="0.5" />
<line x1="1098.5" y1="467.8" x2="1098.5" y2="507.9" stroke="#4a4032" stroke-width="0.5" />
<line x1="1120.0" y1="461.0" x2="1120.0" y2="500.8" stroke="#4a4032" stroke-width="0.5" />
<line x1="1141.5" y1="454.2" x2="1141.5" y2="493.8" stroke="#4a4032" stroke-width="0.5" />
<line x1="1163.0" y1="447.4" x2="1163.0" y2="486.7" stroke="#4a4032" stroke-width="0.5" />
<line x1="1184.5" y1="440.6" x2="1184.5" y2="479.7" stroke="#4a4032" stroke-width="0.5" />
<line x1="850.0" y1="552.5" x2="867.0" y2="547.1" stroke="#4a4032" stroke-width="0.45" />
<line x1="867.0" y1="547.1" x2="884.0" y2="541.7" stroke="#4a4032" stroke-width="0.45" />
<line x1="884.0" y1="541.7" x2="901.0" y2="536.3" stroke="#4a4032" stroke-width="0.45" />
<line x1="901.0" y1="536.3" x2="918.0" y2="531.0" stroke="#4a4032" stroke-width="0.45" />
<line x1="918.0" y1="531.0" x2="935.0" y2="525.6" stroke="#4a4032" stroke-width="0.45" />
<line x1="935.0" y1="525.6" x2="952.0" y2="520.2" stroke="#4a4032" stroke-width="0.45" />
<line x1="952.0" y1="520.2" x2="969.0" y2="514.8" stroke="#4a4032" stroke-width="0.45" />
<line x1="969.0" y1="514.8" x2="986.0" y2="509.4" stroke="#4a4032" stroke-width="0.45" />
<line x1="986.0" y1="509.4" x2="1003.0" y2="504.1" stroke="#4a4032" stroke-width="0.45" />
<line x1="1003.0" y1="504.1" x2="1020.0" y2="498.7" stroke="#4a4032" stroke-width="0.45" />
<line x1="1020.0" y1="498.7" x2="1037.0" y2="493.3" stroke="#4a4032" stroke-width="0.45" />
<line x1="1037.0" y1="493.3" x2="1054.0" y2="487.9" stroke="#4a4032" stroke-width="0.45" />
<line x1="1054.0" y1="487.9" x2="1071.0" y2="482.5" stroke="#4a4032" stroke-width="0.45" />
<line x1="1071.0" y1="482.5" x2="1088.0" y2="477.1" stroke="#4a4032" stroke-width="0.45" />
<line x1="1088.0" y1="477.1" x2="1105.0" y2="471.8" stroke="#4a4032" stroke-width="0.45" />
<line x1="1105.0" y1="471.8" x2="1122.0" y2="466.4" stroke="#4a4032" stroke-width="0.45" />
<line x1="1122.0" y1="466.4" x2="1139.0" y2="461.0" stroke="#4a4032" stroke-width="0.45" />
<line x1="1139.0" y1="461.0" x2="1156.0" y2="455.6" stroke="#4a4032" stroke-width="0.45" />
<line x1="1156.0" y1="455.6" x2="1173.0" y2="450.2" stroke="#4a4032" stroke-width="0.45" />
<line x1="1173.0" y1="450.2" x2="1190.0" y2="444.9" stroke="#4a4032" stroke-width="0.45" />
<line x1="1080.0" y1="460.7" x2="1082.0" y2="470.7" stroke="#5a5040" stroke-width="0.55" />
<line x1="1090.5" y1="457.4" x2="1092.5" y2="467.4" stroke="#5a5040" stroke-width="0.55" />
<line x1="1101.0" y1="454.0" x2="1103.0" y2="464.0" stroke="#5a5040" stroke-width="0.55" />
<line x1="1111.5" y1="450.7" x2="1113.5" y2="460.7" stroke="#5a5040" stroke-width="0.55" />
<line x1="1122.0" y1="447.4" x2="1124.0" y2="457.4" stroke="#5a5040" stroke-width="0.55" />
<line x1="1132.5" y1="444.1" x2="1134.5" y2="454.1" stroke="#5a5040" stroke-width="0.55" />
<line x1="1143.0" y1="440.7" x2="1145.0" y2="450.7" stroke="#5a5040" stroke-width="0.55" />
<line x1="1153.5" y1="437.4" x2="1155.5" y2="447.4" stroke="#5a5040" stroke-width="0.55" />
<line x1="1164.0" y1="434.1" x2="1166.0" y2="444.1" stroke="#5a5040" stroke-width="0.55" />
<line x1="1174.5" y1="430.8" x2="1176.5" y2="440.8" stroke="#5a5040" stroke-width="0.55" />
<line x1="1185.0" y1="427.4" x2="1187.0" y2="437.4" stroke="#5a5040" stroke-width="0.55" />
<line x1="1076.0" y1="471.9" x2="1193.0" y2="434.9" stroke="#4a4032" stroke-width="0.6" />
<rect x="873.3" y="548.0" width="6.4" height="10" rx="1.6" fill="#eaeaee" stroke="#505050" stroke-width="0.7"/>
<path d="M875.7 550.0 Q878.9 553.0 875.7 556.0" stroke="#8a8a8a" stroke-width="0.7" fill="none"/>
<rect x="904.1" y="538.0" width="6.4" height="10" rx="1.6" fill="#eaeaee" stroke="#505050" stroke-width="0.7"/>
<path d="M906.5 540.0 Q909.7 543.0 906.5 546.0" stroke="#8a8a8a" stroke-width="0.7" fill="none"/>
<rect x="955.8" y="521.0" width="6.4" height="10" rx="1.6" fill="#eaeaee" stroke="#505050" stroke-width="0.7"/>
<path d="M958.2 523.0 Q961.4 526.0 958.2 529.0" stroke="#8a8a8a" stroke-width="0.7" fill="none"/>
<rect x="983.8" y="512.0" width="6.4" height="10" rx="1.6" fill="#eaeaee" stroke="#505050" stroke-width="0.7"/>
<path d="M986.2 514.0 Q989.4 517.0 986.2 520.0" stroke="#8a8a8a" stroke-width="0.7" fill="none"/>
<rect x="1032.8" y="496.5" width="6.4" height="10" rx="1.6" fill="#eaeaee" stroke="#505050" stroke-width="0.7"/>
<path d="M1035.2 498.5 Q1038.4 501.5 1035.2 504.5" stroke="#8a8a8a" stroke-width="0.7" fill="none"/>
<rect x="1057.8" y="488.0" width="6.4" height="10" rx="1.6" fill="#eaeaee" stroke="#505050" stroke-width="0.7"/>
<path d="M1060.2 490.0 Q1063.4 493.0 1060.2 496.0" stroke="#8a8a8a" stroke-width="0.7" fill="none"/>
<rect x="1102.8" y="474.6" width="6.4" height="10" rx="1.6" fill="#eaeaee" stroke="#505050" stroke-width="0.7"/>
<path d="M1105.2 476.6 Q1108.4 479.6 1105.2 482.6" stroke="#8a8a8a" stroke-width="0.7" fill="none"/>
<polygon points="970.0,537.0 984.7,532.4 984.7,545.7 970.0,550.5" fill="url(#cgrl)" stroke="#3a3428" stroke-width="0.4" stroke-linejoin="round"/>
<polygon points="970.0,550.5 984.7,545.7 984.7,558.4 970.0,563.0" fill="url(#rgrl)"/>
<polygon points="998.0,523.0 1026.0,514.3 1026.0,532.1 998.0,541.3" fill="url(#cgrl)" stroke="#3a3428" stroke-width="0.4" stroke-linejoin="round"/>
<polygon points="998.0,541.3 1026.0,532.1 1026.0,544.3 998.0,553.0" fill="url(#rgrl)"/>
<polygon points="1039.0,513.0 1052.0,509.0 1052.0,523.6 1039.0,527.9" fill="url(#cgrl)" stroke="#3a3428" stroke-width="0.4" stroke-linejoin="round"/>
<polygon points="1039.0,527.9 1052.0,523.6 1052.0,536.0 1039.0,540.0" fill="url(#rgrl)"/>
<polygon points="1121.6,481.0 1143.0,474.4 1143.0,493.8 1121.6,500.8" fill="url(#cgrl)" stroke="#3a3428" stroke-width="0.4" stroke-linejoin="round"/>
<polygon points="1121.6,500.8 1143.0,493.8 1143.0,508.4 1121.6,515.0" fill="url(#rgrl)"/>
<polygon points="1123.6,461.0 1135.0,457.5 1135.0,481.0 1123.6,484.0" fill="#dcdce2" stroke="#333" stroke-width="0.7" stroke-linejoin="round"/>
<line x1="1129.0" y1="460.0" x2="1129.0" y2="482.0" stroke="#f0f0f0" stroke-width="1" />
<polygon points="1155.0,459.0 1173.4,453.5 1173.4,473.0 1155.0,478.0" fill="#d0d3da" stroke="#333" stroke-width="0.7" stroke-linejoin="round"/>
<line x1="1166.0" y1="456.0" x2="1166.0" y2="475.0" stroke="#f2ecd8" stroke-width="1.3" />
<polygon points="1177.0,451.0 1188.0,448.0 1188.0,467.0 1177.0,470.0" fill="#d0d3da" stroke="#333" stroke-width="0.7" stroke-linejoin="round"/>
<line x1="1140.0" y1="458.0" x2="1140.0" y2="490.0" stroke="#4a4032" stroke-width="0.6" />
<line x1="844.3" y1="591.7" x2="1193.0" y2="477.4" stroke="#1e1d1a" stroke-width="0.9" />
<polygon points="724.0,537.0 736.0,529.0 762.0,518.0 786.0,511.0 803.0,502.0 825.0,498.0 853.0,486.4 872.0,478.6 907.6,469.5 922.0,465.6 939.0,459.0 967.5,452.6 980.0,449.3 1040.0,431.0 1057.0,429.0 1135.0,410.0 1165.0,403.0 1188.0,420.0 1188.0,425.5 829.7,538.9 796.0,548.5 777.0,553.0 762.5,551.0 748.0,548.5 725.0,545.0" fill="#686963"/>
<polygon points="803.0,502.0 825.0,498.0 853.0,486.4 872.0,478.6 907.6,469.5 922.0,465.6 939.0,459.0 967.5,452.6 980.0,449.3 1040.0,431.0 1057.0,429.0 1135.0,410.0 1165.0,403.0 1170.0,408.0 1060.0,440.0 980.0,462.0 870.0,494.0 805.0,512.0" fill="#74756e"/>
<polygon points="806.0,500.9 852.0,486.7 855.0,492.7 809.0,506.9" fill="#84857e" stroke="#2a2a28" stroke-width="0.5" stroke-linejoin="round"/>
<polygon points="874.0,479.9 918.0,466.2 921.0,472.2 877.0,485.9" fill="#84857e" stroke="#2a2a28" stroke-width="0.5" stroke-linejoin="round"/>
<polygon points="840.0,494.8 858.0,489.2 860.0,492.2 842.0,497.8" fill="#262724"/>
<polygon points="905.0,473.2 927.0,466.3 929.0,469.3 907.0,476.2" fill="#262724"/>
<polygon points="960.0,457.3 978.0,451.7 980.0,454.7 962.0,460.3" fill="#262724"/>
<polygon points="1000.0,446.2 1026.0,438.1 1028.0,441.1 1002.0,449.2" fill="#262724"/>
<polygon points="1040.0,434.0 1054.0,429.7 1056.0,432.7 1042.0,437.0" fill="#262724"/>
<polygon points="1090.0,424.0 1110.0,417.8 1112.0,420.8 1092.0,427.0" fill="#262724"/>
<polygon points="1120.0,416.7 1136.0,411.7 1138.0,414.7 1122.0,419.7" fill="#262724"/>
<polyline points="805.0,506.0 1165.0,406.0" fill="none" stroke="#2a2a27" stroke-width="0.7" />
<polyline points="808.0,512.0 1168.0,410.0" fill="none" stroke="#2a2a27" stroke-width="0.6" />
<line x1="812.0" y1="501.9" x2="814.0" y2="508.4" stroke="#3a3a36" stroke-width="0.6" />
<line x1="824.0" y1="499.7" x2="826.0" y2="506.2" stroke="#3a3a36" stroke-width="0.6" />
<line x1="836.0" y1="494.9" x2="838.0" y2="501.4" stroke="#3a3a36" stroke-width="0.6" />
<line x1="848.0" y1="490.0" x2="850.0" y2="496.5" stroke="#3a3a36" stroke-width="0.6" />
<line x1="860.0" y1="485.0" x2="862.0" y2="491.5" stroke="#3a3a36" stroke-width="0.6" />
<line x1="872.0" y1="480.1" x2="874.0" y2="486.6" stroke="#3a3a36" stroke-width="0.6" />
<line x1="884.0" y1="477.0" x2="886.0" y2="483.5" stroke="#3a3a36" stroke-width="0.6" />
<line x1="896.0" y1="474.0" x2="898.0" y2="480.5" stroke="#3a3a36" stroke-width="0.6" />
<line x1="908.0" y1="470.9" x2="910.0" y2="477.4" stroke="#3a3a36" stroke-width="0.6" />
<line x1="920.0" y1="467.6" x2="922.0" y2="474.1" stroke="#3a3a36" stroke-width="0.6" />
<line x1="932.0" y1="463.2" x2="934.0" y2="469.7" stroke="#3a3a36" stroke-width="0.6" />
<line x1="944.0" y1="459.4" x2="946.0" y2="465.9" stroke="#3a3a36" stroke-width="0.6" />
<line x1="956.0" y1="456.7" x2="958.0" y2="463.2" stroke="#3a3a36" stroke-width="0.6" />
<line x1="968.0" y1="454.0" x2="970.0" y2="460.5" stroke="#3a3a36" stroke-width="0.6" />
<line x1="980.0" y1="450.8" x2="982.0" y2="457.3" stroke="#3a3a36" stroke-width="0.6" />
<line x1="992.0" y1="447.1" x2="994.0" y2="453.6" stroke="#3a3a36" stroke-width="0.6" />
<line x1="1004.0" y1="443.5" x2="1006.0" y2="450.0" stroke="#3a3a36" stroke-width="0.6" />
<line x1="1016.0" y1="439.8" x2="1018.0" y2="446.3" stroke="#3a3a36" stroke-width="0.6" />
<line x1="1028.0" y1="436.2" x2="1030.0" y2="442.7" stroke="#3a3a36" stroke-width="0.6" />
<line x1="1040.0" y1="432.5" x2="1042.0" y2="439.0" stroke="#3a3a36" stroke-width="0.6" />
<line x1="1052.0" y1="431.1" x2="1054.0" y2="437.6" stroke="#3a3a36" stroke-width="0.6" />
<line x1="1064.0" y1="428.8" x2="1066.0" y2="435.3" stroke="#3a3a36" stroke-width="0.6" />
<line x1="1076.0" y1="425.9" x2="1078.0" y2="432.4" stroke="#3a3a36" stroke-width="0.6" />
<line x1="1088.0" y1="422.9" x2="1090.0" y2="429.4" stroke="#3a3a36" stroke-width="0.6" />
<line x1="1100.0" y1="420.0" x2="1102.0" y2="426.5" stroke="#3a3a36" stroke-width="0.6" />
<line x1="1112.0" y1="417.1" x2="1114.0" y2="423.6" stroke="#3a3a36" stroke-width="0.6" />
<line x1="1124.0" y1="414.2" x2="1126.0" y2="420.7" stroke="#3a3a36" stroke-width="0.6" />
<line x1="1136.0" y1="411.3" x2="1138.0" y2="417.8" stroke="#3a3a36" stroke-width="0.6" />
<line x1="1148.0" y1="408.5" x2="1150.0" y2="415.0" stroke="#3a3a36" stroke-width="0.6" />
<ellipse cx="835" cy="495" rx="10" ry="4.5" fill="#8a8b84" stroke="#283040" stroke-width="1"/>
<ellipse cx="835" cy="494.5" rx="4.0" ry="2.0" fill="#9a9ca0" stroke="#333" stroke-width="0.5"/>
<ellipse cx="954.6" cy="460.8" rx="14" ry="4.5" fill="#8a8e94" stroke="#283040" stroke-width="1"/>
<ellipse cx="954.6" cy="460.3" rx="5.6" ry="2.0" fill="#9a9ca0" stroke="#333" stroke-width="0.5"/>
<ellipse cx="995.6" cy="449" rx="15" ry="5.5" fill="#8a8e94" stroke="#283040" stroke-width="1"/>
<ellipse cx="995.6" cy="448.5" rx="6.0" ry="2.5" fill="#9a9ca0" stroke="#333" stroke-width="0.5"/>
<path d="M790.0 515.9 Q803.0 532.0 801.0 548.0" stroke="#1e1d1a" stroke-width="0.55" fill="none"/>
<path d="M813.5 508.6 Q826.5 528.3 824.5 548.0" stroke="#1e1d1a" stroke-width="0.55" fill="none"/>
<path d="M837.0 501.3 Q850.0 519.0 848.0 536.6" stroke="#1e1d1a" stroke-width="0.55" fill="none"/>
<path d="M860.5 494.0 Q873.5 511.6 871.5 529.2" stroke="#1e1d1a" stroke-width="0.55" fill="none"/>
<path d="M884.0 486.8 Q897.0 504.2 895.0 521.7" stroke="#1e1d1a" stroke-width="0.55" fill="none"/>
<path d="M907.5 479.5 Q920.5 496.9 918.5 514.3" stroke="#1e1d1a" stroke-width="0.55" fill="none"/>
<path d="M931.0 472.2 Q944.0 489.5 942.0 506.8" stroke="#1e1d1a" stroke-width="0.55" fill="none"/>
<path d="M954.5 464.9 Q967.5 482.2 965.5 499.4" stroke="#1e1d1a" stroke-width="0.55" fill="none"/>
<path d="M978.0 457.6 Q991.0 474.8 989.0 492.0" stroke="#1e1d1a" stroke-width="0.55" fill="none"/>
<path d="M1001.5 450.3 Q1014.5 467.4 1012.5 484.5" stroke="#1e1d1a" stroke-width="0.55" fill="none"/>
<path d="M1025.0 443.1 Q1038.0 460.1 1036.0 477.1" stroke="#1e1d1a" stroke-width="0.55" fill="none"/>
<path d="M1048.5 435.8 Q1061.5 452.7 1059.5 469.7" stroke="#1e1d1a" stroke-width="0.55" fill="none"/>
<path d="M1072.0 428.5 Q1085.0 445.3 1083.0 462.2" stroke="#1e1d1a" stroke-width="0.55" fill="none"/>
<path d="M1095.5 421.2 Q1108.5 438.0 1106.5 454.8" stroke="#1e1d1a" stroke-width="0.55" fill="none"/>
<path d="M1119.0 413.9 Q1132.0 430.6 1130.0 447.3" stroke="#1e1d1a" stroke-width="0.55" fill="none"/>
<path d="M1142.5 406.6 Q1155.5 423.3 1153.5 439.9" stroke="#1e1d1a" stroke-width="0.55" fill="none"/>
<path d="M1166.0 399.3 Q1179.0 415.9 1177.0 432.5" stroke="#1e1d1a" stroke-width="0.55" fill="none"/>
<polyline points="790.0,519.0 1170.0,407.0" fill="none" stroke="#1e1d1a" stroke-width="0.6" />
<line x1="829.7" y1="538.9" x2="1188.0" y2="425.5" stroke="#1e1d1a" stroke-width="0.9" />
<path d="M728 540 Q750 520 800 512 M735 545 Q760 528 805 520" stroke="#2a2a28" stroke-width="0.6" fill="none"/>
<polygon points="854.0,525.8 881.5,520.2 882.5,542.5 855.0,549.0" fill="url(#grl)" stroke="#141414" stroke-width="0.6" stroke-linejoin="round"/>
<polygon points="880.5,521.2 890.9,518.2 898.5,526.2 898.5,536.5 882.5,539.5" fill="#f5e4b7" stroke="#3e3628" stroke-width="0.6" stroke-linejoin="round"/>
<line x1="884.9" y1="534.5" x2="898.5" y2="531.5" stroke="#3e3628" stroke-width="0.5" />
<polygon points="893.0,513.4 911.6,509.6 912.6,533.0 894.0,537.7" fill="url(#grl)" stroke="#141414" stroke-width="0.6" stroke-linejoin="round"/>
<polygon points="910.6,510.6 916.6,508.6 920.6,515.6 920.6,527.0 912.6,530.0" fill="#f5e4b7" stroke="#3e3628" stroke-width="0.6" stroke-linejoin="round"/>
<line x1="913.4" y1="525.0" x2="920.6" y2="522.0" stroke="#3e3628" stroke-width="0.5" />
<polygon points="914.5,507.7 933.0,503.9 934.0,525.9 915.5,530.6" fill="url(#grl)" stroke="#141414" stroke-width="0.6" stroke-linejoin="round"/>
<polygon points="932.0,504.9 939.6,502.5 945.0,509.9 945.0,519.9 934.0,522.9" fill="#f5e4b7" stroke="#3e3628" stroke-width="0.6" stroke-linejoin="round"/>
<line x1="935.4" y1="517.9" x2="945.0" y2="514.9" stroke="#3e3628" stroke-width="0.5" />
<polygon points="959.0,494.2 971.0,491.8 972.0,512.6 960.0,516.0" fill="url(#grl)" stroke="#141414" stroke-width="0.6" stroke-linejoin="round"/>
<polygon points="970.0,492.8 976.5,490.6 981.0,497.8 981.0,506.6 972.0,509.6" fill="#f5e4b7" stroke="#3e3628" stroke-width="0.6" stroke-linejoin="round"/>
<line x1="973.0" y1="504.6" x2="981.0" y2="501.6" stroke="#3e3628" stroke-width="0.5" />
<polygon points="972.0,486.8 1005.4,480.2 1006.4,504.3 973.0,512.0" fill="url(#grl)" stroke="#141414" stroke-width="0.6" stroke-linejoin="round"/>
<polygon points="1004.4,481.2 1010.9,479.0 1015.4,486.2 1015.4,498.3 1006.4,501.3" fill="#f5e4b7" stroke="#3e3628" stroke-width="0.6" stroke-linejoin="round"/>
<line x1="1007.4" y1="496.3" x2="1015.4" y2="493.3" stroke="#3e3628" stroke-width="0.5" />
<polygon points="1006.0,477.2 1037.7,470.8 1038.7,491.7 1007.0,499.0" fill="url(#grl)" stroke="#141414" stroke-width="0.6" stroke-linejoin="round"/>
<polygon points="1036.7,471.8 1043.2,469.6 1047.7,476.8 1047.7,485.7 1038.7,488.7" fill="#f5e4b7" stroke="#3e3628" stroke-width="0.6" stroke-linejoin="round"/>
<line x1="1039.7" y1="483.7" x2="1047.7" y2="480.7" stroke="#3e3628" stroke-width="0.5" />
<polygon points="1039.6,469.3 1053.0,466.7 1054.0,484.3 1040.6,488.0" fill="url(#grl)" stroke="#141414" stroke-width="0.6" stroke-linejoin="round"/>
<polygon points="1052.0,467.7 1059.0,465.3 1064.0,472.7 1064.0,478.3 1054.0,481.3" fill="#f5e4b7" stroke="#3e3628" stroke-width="0.6" stroke-linejoin="round"/>
<line x1="1055.2" y1="476.3" x2="1064.0" y2="473.3" stroke="#3e3628" stroke-width="0.5" />
<polygon points="1067.0,459.9 1085.5,456.1 1086.5,475.9 1068.0,480.6" fill="url(#grl)" stroke="#141414" stroke-width="0.6" stroke-linejoin="round"/>
<polygon points="1084.5,457.1 1091.0,454.9 1095.5,462.1 1095.5,469.9 1086.5,472.9" fill="#f5e4b7" stroke="#3e3628" stroke-width="0.6" stroke-linejoin="round"/>
<line x1="1087.5" y1="467.9" x2="1095.5" y2="464.9" stroke="#3e3628" stroke-width="0.5" />
<polygon points="777.0,556.0 800.0,548.0 832.0,540.0 836.0,556.0 800.0,566.0 780.0,570.0" fill="#6c130e" stroke="#1a0806" stroke-width="0.5" stroke-linejoin="round"/>
<polygon points="800.0,564.0 807.0,562.0 807.0,597.0 800.0,599.0" fill="#e6dede" stroke="#222" stroke-width="0.6" stroke-linejoin="round"/>
<line x1="803.5" y1="563.0" x2="803.5" y2="598.0" stroke="#a88" stroke-width="0.6" />
<polygon points="822.0,565.0 830.0,563.0 830.0,580.0 822.0,582.0" fill="#ece6e6" stroke="#222" stroke-width="0.6" stroke-linejoin="round"/>
<line x1="812.0" y1="560.0" x2="812.0" y2="632.0" stroke="#2a0604" stroke-width="0.6" />
<line x1="816.0" y1="600.0" x2="845.0" y2="592.0" stroke="#2a0604" stroke-width="0.6" />
<line x1="790.0" y1="572.0" x2="790.0" y2="638.0" stroke="#2a0604" stroke-width="0.6" />
<line x1="760.0" y1="585.0" x2="760.0" y2="640.0" stroke="#2a0604" stroke-width="0.6" />
<polygon points="724.0,548.5 748.0,551.0 781.7,559.0 792.5,567.7 786.5,579.7 772.0,584.5 745.6,573.7 724.0,566.5 718.0,564.0" fill="#d8caca" stroke="#1a1a1a" stroke-width="0.8" stroke-linejoin="round"/>
<polygon points="741.0,551.0 748.0,552.0 743.0,575.0 736.0,571.0" fill="#8a2a24"/>
<line x1="760.0" y1="555.0" x2="752.0" y2="578.0" stroke="#333" stroke-width="0.8" />
<line x1="773.0" y1="559.0" x2="767.0" y2="583.0" stroke="#333" stroke-width="0.8" />
<circle cx="732" cy="558" r="3" fill="none" stroke="#999" stroke-width="0.6"/>
<polygon points="776.0,565.0 792.0,568.0 786.0,580.0 771.0,584.0" fill="#f6f2f2" stroke="#222" stroke-width="0.6" stroke-linejoin="round"/>
<polygon points="718.0,566.0 745.0,574.0 772.0,586.0 792.0,581.0 797.0,596.0 794.0,634.0 760.0,643.0 744.0,648.0 735.0,655.0 727.0,660.0 702.0,655.0 684.0,650.0 676.0,646.0 678.0,635.0 679.0,623.0 684.0,618.0 687.0,606.0 689.0,590.0 696.0,568.0" fill="#721510" stroke="#1a0a08" stroke-width="0.6" stroke-linejoin="round"/>
<polygon points="696.0,566.0 718.0,563.0 745.0,574.0 772.0,586.0 770.0,592.0 740.0,598.0 712.0,585.0 700.0,580.0" fill="#5e0f0b" stroke="#1a0806" stroke-width="0.5" stroke-linejoin="round"/>
<line x1="705.0" y1="575.0" x2="765.0" y2="590.0" stroke="#2a0604" stroke-width="0.6" />
<line x1="715.0" y1="590.0" x2="770.0" y2="600.0" stroke="#2a0604" stroke-width="0.5" />
<polygon points="689.0,588.0 698.0,578.0 712.0,586.0 716.0,598.0 712.0,622.0 706.0,642.0 684.0,640.0 684.0,618.0 687.0,606.0" fill="#7a1812" stroke="#1a0806" stroke-width="0.5" stroke-linejoin="round"/>
<defs><linearGradient id="cowl" x1="0" y1="0" x2="1" y2="0"><stop offset="0" stop-color="#842019"/><stop offset="1" stop-color="#701510"/></linearGradient></defs>
<polygon points="716.0,598.0 740.0,598.0 778.0,594.0 778.0,638.0 744.0,648.0 727.0,659.0 712.0,645.0" fill="url(#cowl)" stroke="#1a0806" stroke-width="0.6" stroke-linejoin="round"/>
<line x1="722.0" y1="614.0" x2="778.0" y2="610.0" stroke="#2a0604" stroke-width="0.7" />
<line x1="778.0" y1="594.0" x2="779.0" y2="634.0" stroke="#2a0604" stroke-width="0.6" />
<circle cx="699" cy="588" r="3.6" fill="#c09a38" stroke="#3a2a00" stroke-width="0.8"/>
<circle cx="696" cy="597" r="2.2" fill="#4a0c08" stroke="#2a0604" stroke-width="0.5"/>
<circle cx="704" cy="600" r="2.2" fill="#4a0c08" stroke="#2a0604" stroke-width="0.5"/>
<polygon points="688.0,604.0 704.0,607.0 703.0,616.0 687.0,613.0" fill="#8a2a26" stroke="#e0b8b8" stroke-width="0.6" stroke-linejoin="round"/>
<line x1="690.0" y1="606.0" x2="692.5" y2="613.0" stroke="#f2dcdc" stroke-width="1" />
<line x1="694.6" y1="606.6" x2="697.1" y2="613.6" stroke="#f2dcdc" stroke-width="1" />
<line x1="699.2" y1="607.2" x2="701.7" y2="614.2" stroke="#f2dcdc" stroke-width="1" />
<line x1="688.0" y1="619.0" x2="708.0" y2="623.0" stroke="#3a0806" stroke-width="0.6" />
<line x1="688.0" y1="622.0" x2="708.0" y2="626.0" stroke="#3a0806" stroke-width="0.6" />
<line x1="688.0" y1="625.0" x2="708.0" y2="629.0" stroke="#3a0806" stroke-width="0.6" />
<circle cx="683" cy="624" r="3.3" fill="#d8d8d8" stroke="#222" stroke-width="0.8"/><circle cx="683" cy="624" r="1.3" fill="#b89a30"/>
<circle cx="710" cy="630.5" r="3.8" fill="#d8d8d8" stroke="#222" stroke-width="0.8"/><circle cx="710" cy="630.5" r="1.5" fill="#b89a30"/>
<polygon points="679.0,634.0 705.0,640.0 708.0,654.0 700.0,657.0 680.0,650.0 677.0,645.0" fill="#161a20" stroke="#d4d8dc" stroke-width="0.8" stroke-linejoin="round"/>
<circle cx="684" cy="646" r="3" fill="#10141a" stroke="#d4d8dc" stroke-width="0.7"/>
<circle cx="695" cy="649" r="2.6" fill="#10141a" stroke="#d4d8dc" stroke-width="0.7"/>
<polygon points="688.0,654.0 725.0,660.0 744.0,660.0 738.0,668.0 705.0,668.0 690.0,660.0" fill="#141c26" stroke="#c8ccd0" stroke-width="0.6" stroke-linejoin="round"/>
<circle cx="693" cy="664" r="2" fill="#10141a"/>
<line x1="640.0" y1="527.0" x2="722.0" y2="548.0" stroke="#68e4ec" stroke-width="1.8" />
<line x1="640.0" y1="527.0" x2="644.0" y2="678.0" stroke="#68e4ec" stroke-width="1.8" />
<line x1="644.0" y1="678.0" x2="725.0" y2="704.0" stroke="#68e4ec" stroke-width="1.8" />
<line x1="722.0" y1="548.0" x2="725.0" y2="704.0" stroke="#68e4ec" stroke-width="1.8" />
<line x1="640.0" y1="527.0" x2="1126.0" y2="390.0" stroke="#68e4ec" stroke-width="1.8" />
<line x1="1126.0" y1="390.0" x2="1202.0" y2="404.0" stroke="#68e4ec" stroke-width="1.8" />
<line x1="1202.0" y1="404.0" x2="1198.0" y2="531.0" stroke="#68e4ec" stroke-width="1.8" />
<line x1="725.0" y1="704.0" x2="1198.0" y2="531.0" stroke="#68e4ec" stroke-width="1.8" />
<line x1="722.0" y1="548.0" x2="1202.0" y2="404.0" stroke="#68e4ec" stroke-width="1.8" />
<line x1="644.0" y1="678.0" x2="1076.0" y2="530.0" stroke="#68e4ec" stroke-width="1.8" />
<line x1="1172.0" y1="525.0" x2="1198.0" y2="531.0" stroke="#68e4ec" stroke-width="1.8" />
<line x1="1126.0" y1="390.0" x2="1126.0" y2="410.0" stroke="#68e4ec" stroke-width="1.8" />
</g>
<path d="M160 340 L248 285" stroke="#3a3a34" stroke-width="6" stroke-linecap="round"/>
<path d="M160 339 L248 284" stroke="#66665c" stroke-width="4" stroke-linecap="round"/>
<path d="M161 342 L249 287" stroke="#6a1a14" stroke-width="2"/>
<path d="M164 337 L246 286" stroke="#c8b88a" stroke-width="1" stroke-dasharray="2 2"/>
</svg>
<svg width="1536" height="999" viewBox="0 0 1536 999" style="position:absolute;left:0;top:0">
<polygon points="475.1,842.2 512.6,872.2 509.4,876.1 512.6,878.6 509.4,882.5 473.6,853.8 476.7,849.9 472.0,846.1" fill="#66665c" stroke="#34342e" stroke-width="1.3" stroke-linejoin="round"/>
<line x1="476.5" y1="850.1" x2="509.3" y2="876.4" stroke="#4a4a42" stroke-width="0.8"/>
<circle cx="476.7" cy="853.1" r="0.8" fill="#c8b46a"/>
<circle cx="480.6" cy="856.2" r="0.8" fill="#c8b46a"/>
<circle cx="484.5" cy="859.3" r="0.8" fill="#c8b46a"/>
<circle cx="488.4" cy="862.5" r="0.8" fill="#c8b46a"/>
<circle cx="492.3" cy="865.6" r="0.8" fill="#c8b46a"/>
<circle cx="496.2" cy="868.7" r="0.8" fill="#c8b46a"/>
<circle cx="500.1" cy="871.8" r="0.8" fill="#c8b46a"/>
<circle cx="504.0" cy="875.0" r="0.8" fill="#c8b46a"/>
<circle cx="507.9" cy="878.1" r="0.8" fill="#c8b46a"/>
<circle cx="475.9" cy="846.1" r="0.7" fill="#9a9a80"/>
<circle cx="480.2" cy="849.5" r="0.7" fill="#9a9a80"/>
<circle cx="484.5" cy="852.9" r="0.7" fill="#9a9a80"/>
<circle cx="488.8" cy="856.4" r="0.7" fill="#9a9a80"/>
<circle cx="493.1" cy="859.8" r="0.7" fill="#9a9a80"/>
<circle cx="497.4" cy="863.3" r="0.7" fill="#9a9a80"/>
<circle cx="501.7" cy="866.7" r="0.7" fill="#9a9a80"/>
<circle cx="505.9" cy="870.1" r="0.7" fill="#9a9a80"/>
<polygon points="567.7,845.4 605.2,875.4 601.1,880.5 563.7,850.5" fill="#7c1c16" stroke="#2a1412" stroke-width="1.2" stroke-linejoin="round"/>
<polygon points="569.3,843.5 606.7,873.5 604.5,876.2 567.1,846.2" fill="#8e8e88" stroke="#2a2a28" stroke-width="0.8" stroke-linejoin="round"/>
<polygon points="574.0,847.2 575.8,848.7 572.4,853.0 570.5,851.5" fill="#7c1c16" stroke="none" stroke-width="0" stroke-linejoin="round"/>
<polygon points="578.2,850.6 580.1,852.1 576.6,856.4 574.7,854.9" fill="#7c1c16" stroke="none" stroke-width="0" stroke-linejoin="round"/>
<polygon points="582.4,854.0 584.3,855.5 580.8,859.8 579.0,858.3" fill="#7c1c16" stroke="none" stroke-width="0" stroke-linejoin="round"/>
<polygon points="586.6,857.4 588.5,858.9 585.0,863.2 583.2,861.7" fill="#7c1c16" stroke="none" stroke-width="0" stroke-linejoin="round"/>
<polygon points="590.8,860.7 592.7,862.2 589.3,866.5 587.4,865.0" fill="#7c1c16" stroke="none" stroke-width="0" stroke-linejoin="round"/>
<polygon points="595.0,864.1 596.9,865.6 593.5,869.9 591.6,868.4" fill="#7c1c16" stroke="none" stroke-width="0" stroke-linejoin="round"/>
<polygon points="599.2,867.5 601.1,869.0 597.7,873.3 595.8,871.8" fill="#7c1c16" stroke="none" stroke-width="0" stroke-linejoin="round"/>
<polygon points="603.5,870.9 605.3,872.4 601.9,876.7 600.0,875.2" fill="#7c1c16" stroke="none" stroke-width="0" stroke-linejoin="round"/>
<polygon points="567.3,841.2 571.9,845.0 566.3,852.0 561.6,848.2" fill="#a4a49e" stroke="#2a2a28" stroke-width="1" stroke-linejoin="round"/>
<polygon points="604.7,871.2 609.4,875.0 603.8,882.0 599.1,878.2" fill="#a4a49e" stroke="#2a2a28" stroke-width="1" stroke-linejoin="round"/>
<polygon points="660.3,845.4 697.8,875.4 693.7,880.5 656.3,850.5" fill="#7c1c16" stroke="#2a1412" stroke-width="1.2" stroke-linejoin="round"/>
<polygon points="661.9,843.5 699.3,873.5 697.1,876.2 659.7,846.2" fill="#8e8e88" stroke="#2a2a28" stroke-width="0.8" stroke-linejoin="round"/>
<polygon points="666.6,847.2 668.4,848.7 665.0,853.0 663.1,851.5" fill="#7c1c16" stroke="none" stroke-width="0" stroke-linejoin="round"/>
<polygon points="670.8,850.6 672.7,852.1 669.2,856.4 667.3,854.9" fill="#7c1c16" stroke="none" stroke-width="0" stroke-linejoin="round"/>
<polygon points="675.0,854.0 676.9,855.5 673.4,859.8 671.6,858.3" fill="#7c1c16" stroke="none" stroke-width="0" stroke-linejoin="round"/>
<polygon points="679.2,857.4 681.1,858.9 677.6,863.2 675.8,861.7" fill="#7c1c16" stroke="none" stroke-width="0" stroke-linejoin="round"/>
<polygon points="683.4,860.7 685.3,862.2 681.9,866.5 680.0,865.0" fill="#7c1c16" stroke="none" stroke-width="0" stroke-linejoin="round"/>
<polygon points="687.6,864.1 689.5,865.6 686.1,869.9 684.2,868.4" fill="#7c1c16" stroke="none" stroke-width="0" stroke-linejoin="round"/>
<polygon points="691.8,867.5 693.7,869.0 690.3,873.3 688.4,871.8" fill="#7c1c16" stroke="none" stroke-width="0" stroke-linejoin="round"/>
<polygon points="696.1,870.9 697.9,872.4 694.5,876.7 692.6,875.2" fill="#7c1c16" stroke="none" stroke-width="0" stroke-linejoin="round"/>
<polygon points="659.9,841.2 664.5,845.0 658.9,852.0 654.2,848.2" fill="#a4a49e" stroke="#2a2a28" stroke-width="1" stroke-linejoin="round"/>
<polygon points="697.3,871.2 702.0,875.0 696.4,882.0 691.7,878.2" fill="#a4a49e" stroke="#2a2a28" stroke-width="1" stroke-linejoin="round"/>
<polygon points="752.9,845.4 790.4,875.4 786.3,880.5 748.9,850.5" fill="#7c1c16" stroke="#2a1412" stroke-width="1.2" stroke-linejoin="round"/>
<polygon points="754.5,843.5 791.9,873.5 789.7,876.2 752.3,846.2" fill="#8e8e88" stroke="#2a2a28" stroke-width="0.8" stroke-linejoin="round"/>
<polygon points="759.2,847.2 761.0,848.7 757.6,853.0 755.7,851.5" fill="#7c1c16" stroke="none" stroke-width="0" stroke-linejoin="round"/>
<polygon points="763.4,850.6 765.3,852.1 761.8,856.4 759.9,854.9" fill="#7c1c16" stroke="none" stroke-width="0" stroke-linejoin="round"/>
<polygon points="767.6,854.0 769.5,855.5 766.0,859.8 764.2,858.3" fill="#7c1c16" stroke="none" stroke-width="0" stroke-linejoin="round"/>
<polygon points="771.8,857.4 773.7,858.9 770.2,863.2 768.4,861.7" fill="#7c1c16" stroke="none" stroke-width="0" stroke-linejoin="round"/>
<polygon points="776.0,860.7 777.9,862.2 774.5,866.5 772.6,865.0" fill="#7c1c16" stroke="none" stroke-width="0" stroke-linejoin="round"/>
<polygon points="780.2,864.1 782.1,865.6 778.7,869.9 776.8,868.4" fill="#7c1c16" stroke="none" stroke-width="0" stroke-linejoin="round"/>
<polygon points="784.4,867.5 786.3,869.0 782.9,873.3 781.0,871.8" fill="#7c1c16" stroke="none" stroke-width="0" stroke-linejoin="round"/>
<polygon points="788.7,870.9 790.5,872.4 787.1,876.7 785.2,875.2" fill="#7c1c16" stroke="none" stroke-width="0" stroke-linejoin="round"/>
<polygon points="752.5,841.2 757.1,845.0 751.5,852.0 746.8,848.2" fill="#a4a49e" stroke="#2a2a28" stroke-width="1" stroke-linejoin="round"/>
<polygon points="789.9,871.2 794.6,875.0 789.0,882.0 784.3,878.2" fill="#a4a49e" stroke="#2a2a28" stroke-width="1" stroke-linejoin="round"/>
<polygon points="845.5,842.2 883.0,872.2 879.8,876.1 883.0,878.6 879.8,882.5 844.0,853.8 847.1,849.9 842.4,846.1" fill="#66665c" stroke="#34342e" stroke-width="1.3" stroke-linejoin="round"/>
<line x1="846.9" y1="850.1" x2="879.7" y2="876.4" stroke="#4a4a42" stroke-width="0.8"/>
<circle cx="847.1" cy="853.1" r="0.8" fill="#c8b46a"/>
<circle cx="851.0" cy="856.2" r="0.8" fill="#c8b46a"/>
<circle cx="854.9" cy="859.3" r="0.8" fill="#c8b46a"/>
<circle cx="858.8" cy="862.5" r="0.8" fill="#c8b46a"/>
<circle cx="862.7" cy="865.6" r="0.8" fill="#c8b46a"/>
<circle cx="866.6" cy="868.7" r="0.8" fill="#c8b46a"/>
<circle cx="870.5" cy="871.8" r="0.8" fill="#c8b46a"/>
<circle cx="874.4" cy="875.0" r="0.8" fill="#c8b46a"/>
<circle cx="878.3" cy="878.1" r="0.8" fill="#c8b46a"/>
<circle cx="846.3" cy="846.1" r="0.7" fill="#9a9a80"/>
<circle cx="850.6" cy="849.5" r="0.7" fill="#9a9a80"/>
<circle cx="854.9" cy="852.9" r="0.7" fill="#9a9a80"/>
<circle cx="859.2" cy="856.4" r="0.7" fill="#9a9a80"/>
<circle cx="863.5" cy="859.8" r="0.7" fill="#9a9a80"/>
<circle cx="867.8" cy="863.3" r="0.7" fill="#9a9a80"/>
<circle cx="872.0" cy="866.7" r="0.7" fill="#9a9a80"/>
<circle cx="876.3" cy="870.1" r="0.7" fill="#9a9a80"/>
<path d="M939.5999999999999 883 L939.5999999999999 859 Q941.5999999999999 845 959.5999999999999 841 Q971.5999999999999 840 972.5999999999999 851 L972.5999999999999 869 Q971.5999999999999 875 959.5999999999999 880 L947.5999999999999 886 Q939.5999999999999 888 939.5999999999999 883 Z" fill="#4f4e48" stroke="#807f77" stroke-width="1"/>
<path d="M945.5999999999999 857 V875" stroke="#a8a47a" stroke-width="0.6" stroke-dasharray="1 2"/>
<path d="M950.5999999999999 856 V873" stroke="#a8a47a" stroke-width="0.6" stroke-dasharray="1 2"/>
<path d="M955.5999999999999 855 V871" stroke="#a8a47a" stroke-width="0.6" stroke-dasharray="1 2"/>
<path d="M960.5999999999999 854 V869" stroke="#a8a47a" stroke-width="0.6" stroke-dasharray="1 2"/>
<path d="M965.5999999999999 853 V867" stroke="#a8a47a" stroke-width="0.6" stroke-dasharray="1 2"/>
<path d="M1032.1999999999998 883 L1032.1999999999998 859 Q1034.1999999999998 845 1052.1999999999998 841 Q1064.1999999999998 840 1065.1999999999998 851 L1065.1999999999998 869 Q1064.1999999999998 875 1052.1999999999998 880 L1040.1999999999998 886 Q1032.1999999999998 888 1032.1999999999998 883 Z" fill="#4f4e48" stroke="#807f77" stroke-width="1"/>
<path d="M1038.1999999999998 857 V875" stroke="#a8a47a" stroke-width="0.6" stroke-dasharray="1 2"/>
<path d="M1043.1999999999998 856 V873" stroke="#a8a47a" stroke-width="0.6" stroke-dasharray="1 2"/>
<path d="M1048.1999999999998 855 V871" stroke="#a8a47a" stroke-width="0.6" stroke-dasharray="1 2"/>
<path d="M1053.1999999999998 854 V869" stroke="#a8a47a" stroke-width="0.6" stroke-dasharray="1 2"/>
<path d="M1058.1999999999998 853 V867" stroke="#a8a47a" stroke-width="0.6" stroke-dasharray="1 2"/>
<path d="M1124.8 883 L1124.8 859 Q1126.8 845 1144.8 841 Q1156.8 840 1157.8 851 L1157.8 869 Q1156.8 875 1144.8 880 L1132.8 886 Q1124.8 888 1124.8 883 Z" fill="#4f4e48" stroke="#807f77" stroke-width="1"/>
<path d="M1130.8 857 V875" stroke="#a8a47a" stroke-width="0.6" stroke-dasharray="1 2"/>
<path d="M1135.8 856 V873" stroke="#a8a47a" stroke-width="0.6" stroke-dasharray="1 2"/>
<path d="M1140.8 855 V871" stroke="#a8a47a" stroke-width="0.6" stroke-dasharray="1 2"/>
<path d="M1145.8 854 V869" stroke="#a8a47a" stroke-width="0.6" stroke-dasharray="1 2"/>
<path d="M1150.8 853 V867" stroke="#a8a47a" stroke-width="0.6" stroke-dasharray="1 2"/>
<path d="M1217.4 883 L1217.4 859 Q1219.4 845 1237.4 841 Q1249.4 840 1250.4 851 L1250.4 869 Q1249.4 875 1237.4 880 L1225.4 886 Q1217.4 888 1217.4 883 Z" fill="#4f4e48" stroke="#807f77" stroke-width="1"/>
<path d="M1223.4 857 V875" stroke="#a8a47a" stroke-width="0.6" stroke-dasharray="1 2"/>
<path d="M1228.4 856 V873" stroke="#a8a47a" stroke-width="0.6" stroke-dasharray="1 2"/>
<path d="M1233.4 855 V871" stroke="#a8a47a" stroke-width="0.6" stroke-dasharray="1 2"/>
<path d="M1238.4 854 V869" stroke="#a8a47a" stroke-width="0.6" stroke-dasharray="1 2"/>
<path d="M1243.4 853 V867" stroke="#a8a47a" stroke-width="0.6" stroke-dasharray="1 2"/>
<path d="M1310.0 883 L1310.0 859 Q1312.0 845 1330.0 841 Q1342.0 840 1343.0 851 L1343.0 869 Q1342.0 875 1330.0 880 L1318.0 886 Q1310.0 888 1310.0 883 Z" fill="#4f4e48" stroke="#807f77" stroke-width="1"/>
<path d="M1316.0 857 V875" stroke="#a8a47a" stroke-width="0.6" stroke-dasharray="1 2"/>
<path d="M1321.0 856 V873" stroke="#a8a47a" stroke-width="0.6" stroke-dasharray="1 2"/>
<path d="M1326.0 855 V871" stroke="#a8a47a" stroke-width="0.6" stroke-dasharray="1 2"/>
<path d="M1331.0 854 V869" stroke="#a8a47a" stroke-width="0.6" stroke-dasharray="1 2"/>
<path d="M1336.0 853 V867" stroke="#a8a47a" stroke-width="0.6" stroke-dasharray="1 2"/>
<polygon points="1401.1,842.2 1438.6,872.2 1435.4,876.1 1438.6,878.6 1435.4,882.5 1399.6,853.8 1402.7,849.9 1398.0,846.1" fill="#66665c" stroke="#34342e" stroke-width="1.3" stroke-linejoin="round"/>
<line x1="1402.5" y1="850.1" x2="1435.3" y2="876.4" stroke="#4a4a42" stroke-width="0.8"/>
<circle cx="1402.7" cy="853.1" r="0.8" fill="#c8b46a"/>
<circle cx="1406.6" cy="856.2" r="0.8" fill="#c8b46a"/>
<circle cx="1410.5" cy="859.3" r="0.8" fill="#c8b46a"/>
<circle cx="1414.4" cy="862.5" r="0.8" fill="#c8b46a"/>
<circle cx="1418.3" cy="865.6" r="0.8" fill="#c8b46a"/>
<circle cx="1422.2" cy="868.7" r="0.8" fill="#c8b46a"/>
<circle cx="1426.1" cy="871.8" r="0.8" fill="#c8b46a"/>
<circle cx="1430.0" cy="875.0" r="0.8" fill="#c8b46a"/>
<circle cx="1433.9" cy="878.1" r="0.8" fill="#c8b46a"/>
<circle cx="1401.9" cy="846.1" r="0.7" fill="#9a9a80"/>
<circle cx="1406.2" cy="849.5" r="0.7" fill="#9a9a80"/>
<circle cx="1410.5" cy="852.9" r="0.7" fill="#9a9a80"/>
<circle cx="1414.8" cy="856.4" r="0.7" fill="#9a9a80"/>
<circle cx="1419.1" cy="859.8" r="0.7" fill="#9a9a80"/>
<circle cx="1423.4" cy="863.3" r="0.7" fill="#9a9a80"/>
<circle cx="1427.6" cy="866.7" r="0.7" fill="#9a9a80"/>
<circle cx="1431.9" cy="870.1" r="0.7" fill="#9a9a80"/>
<path d="M384 850 L420 873" stroke="#2a2a26" stroke-width="9" stroke-linecap="round"/>
<path d="M384 850 L420 873" stroke="#7a6a4a" stroke-width="7" stroke-linecap="round"/>
<path d="M388 853 L419 872" stroke="#5a1a14" stroke-width="2"/>
<rect x="372" y="874" width="56.5" height="18.5" rx="2" fill="#202127"/>
<text x="400" y="887" font-family="Liberation Sans" font-size="9" font-weight="bold" fill="#e8e8e8" text-anchor="middle">Released</text>
<rect x="372" y="847.5" width="56.6" height="19" rx="2" fill="#4a9ff0"/>
<text x="400" y="859.8" font-family="Liberation Sans" font-size="9" font-weight="bold" fill="#ffffff" text-anchor="middle">View steps</text>
<ellipse cx="400" cy="856.3" rx="38.5" ry="25.8" fill="none" stroke="#e5402a" stroke-width="7"/>
<text x="72" y="315.5" font-family="Liberation Sans" font-size="10.5" font-weight="bold" fill="#ffffff" text-anchor="middle">1</text>
<circle cx="66" cy="49" r="5.9" fill="#ed6a5e"/><circle cx="85" cy="49" r="5.9" fill="#f5bf4f"/><circle cx="104" cy="49" r="5.9" fill="#61c554"/>
</svg>
</div></div></body></html>
